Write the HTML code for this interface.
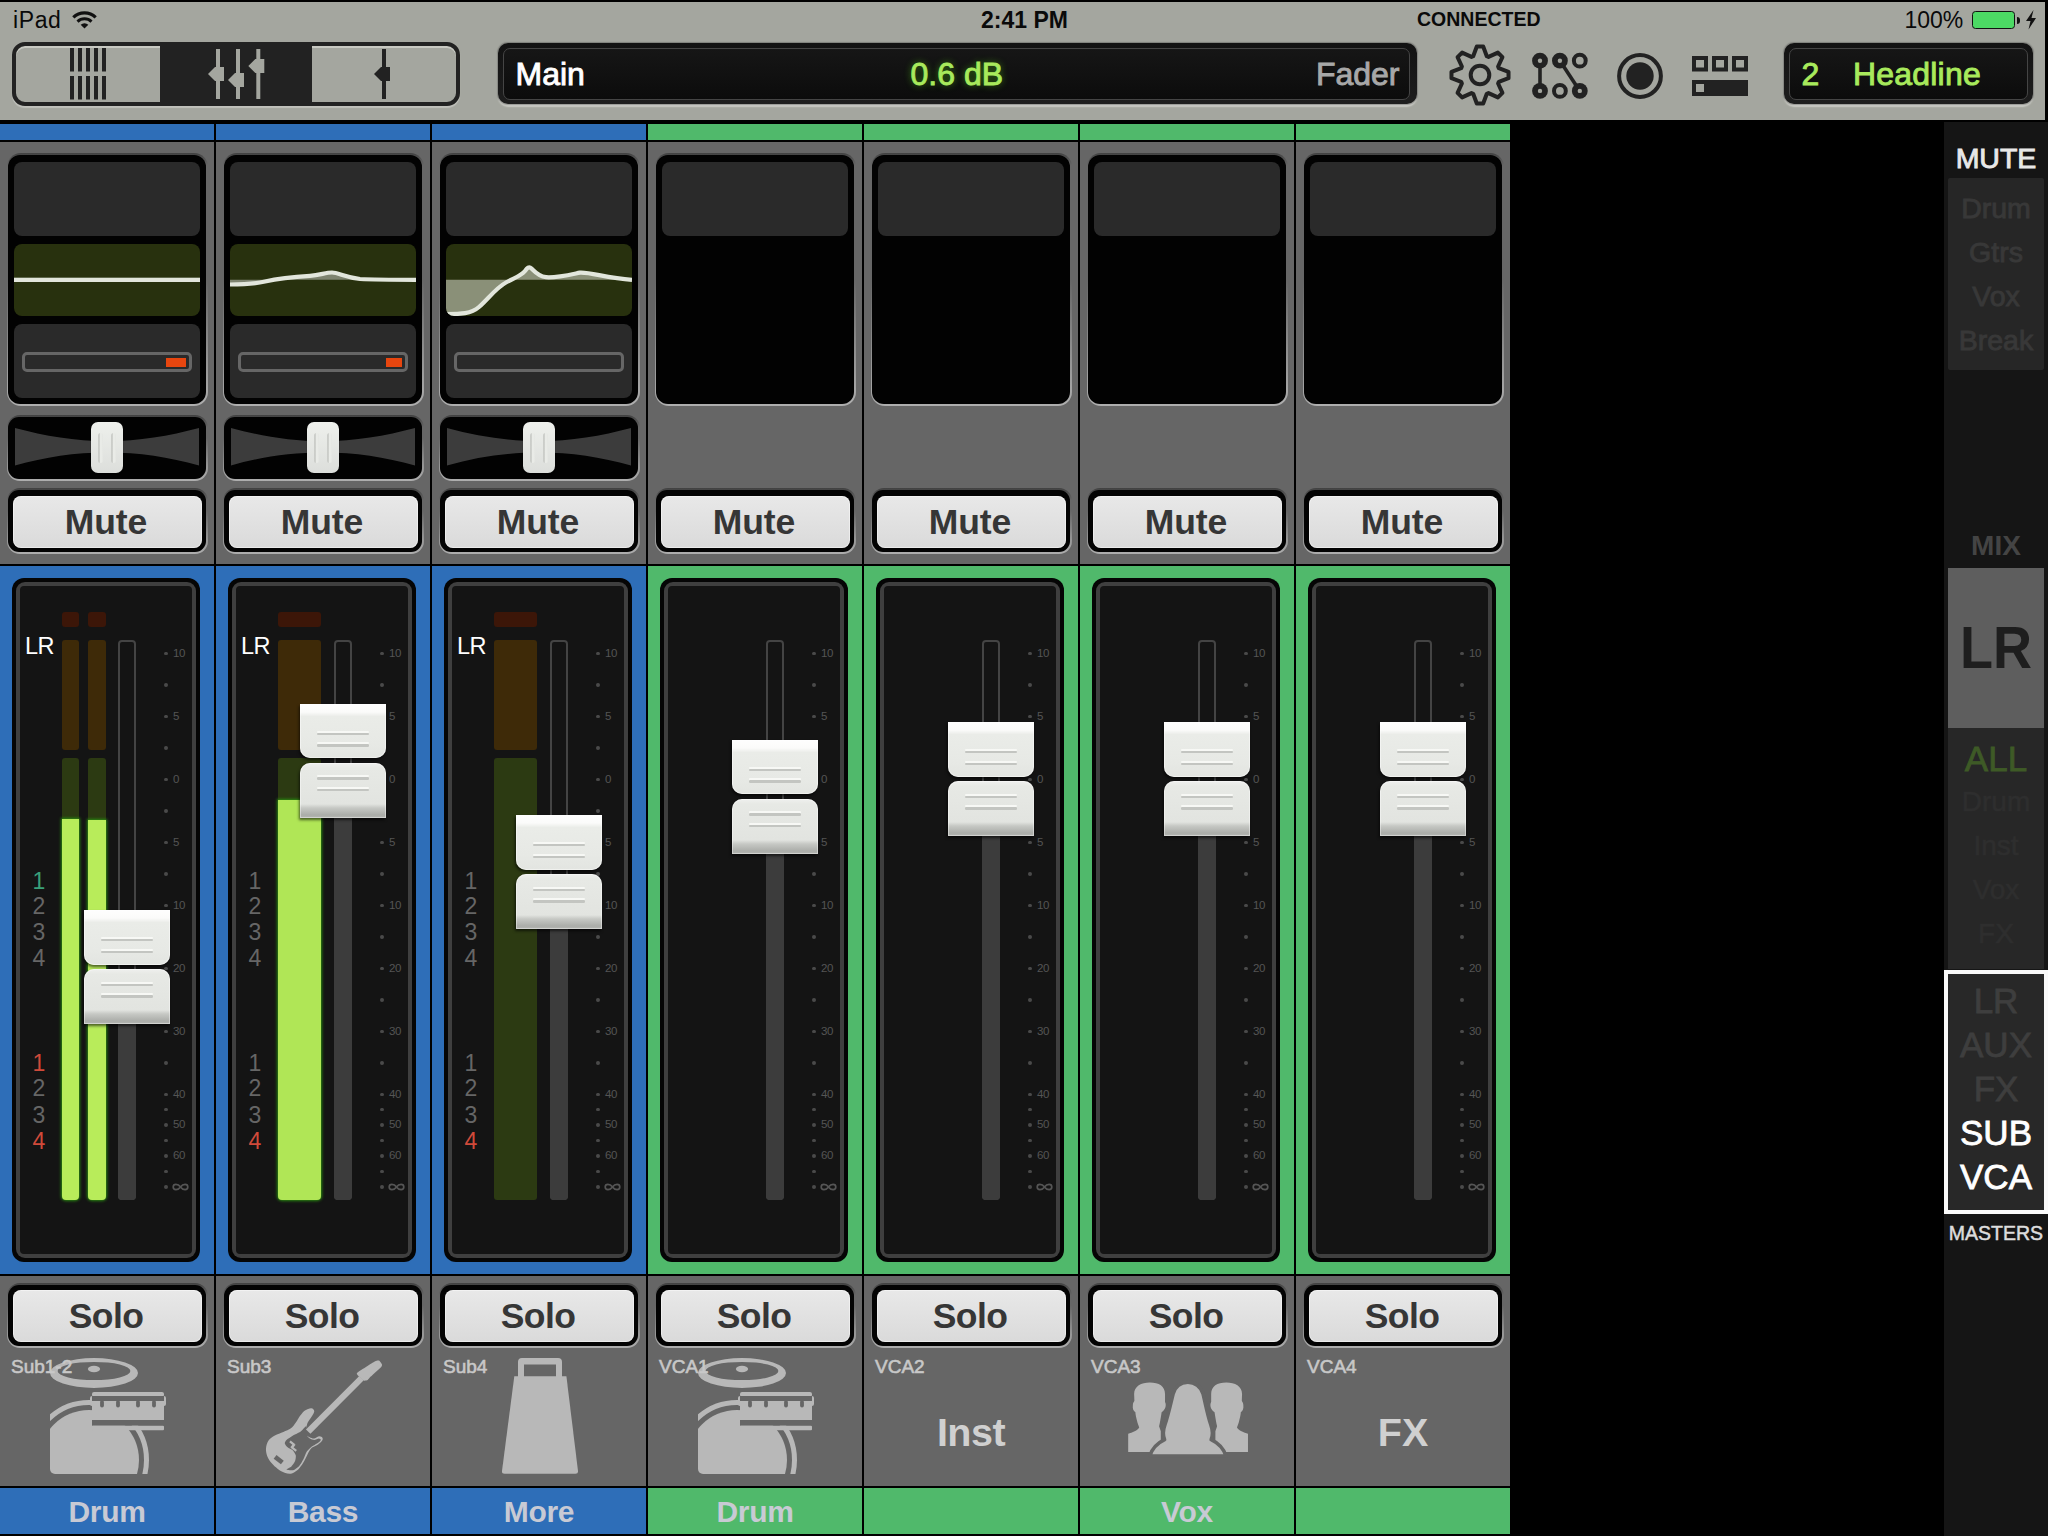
<!DOCTYPE html>
<html><head><meta charset="utf-8"><style>
html,body{margin:0;padding:0;}
body{width:2048px;height:1536px;background:#000;position:relative;overflow:hidden;font-family:"Liberation Sans", sans-serif;}
body>div{position:absolute;}
.t{position:absolute;line-height:1;white-space:nowrap;}
</style></head><body>
<div style="left:0px;top:2px;width:2045px;height:118px;background:#a4a69f;"></div>
<div class="t" style="left:13px;top:9.33px;font-size:23px;color:#0a0a0a;font-weight:normal;letter-spacing:0.6px;">iPad</div>
<svg style="position:absolute;left:72px;top:10px;" width="26" height="20" viewBox="0 0 26 20"><path d="M12.5 18.6 L8.68 14.78 A5.4 5.4 0 0 1 16.32 14.78 Z" fill="#111"/><path d="M5.50 11.60 A9.9 9.9 0 0 1 19.50 11.60" stroke="#111" stroke-width="2.9" fill="none"/><path d="M1.33 7.43 A15.8 15.8 0 0 1 23.67 7.43" stroke="#111" stroke-width="3.2" fill="none"/></svg>
<div class="t" style="left:981px;top:9.33px;font-size:23px;color:#0a0a0a;font-weight:bold;">2:41 PM</div>
<div class="t" style="left:1417px;top:10.49px;font-size:19.5px;color:#0a0a0a;font-weight:bold;">CONNECTED</div>
<div class="t" style="left:1904.5px;top:9.23px;font-size:23px;color:#0a0a0a;font-weight:normal;">100%</div>
<div style="left:1972px;top:11px;width:41px;height:15.5px;border:1.5px solid #111;border-radius:3.5px;background:#4cd964;"></div>
<div style="left:2016.5px;top:17px;width:3px;height:6.5px;background:#111;border-radius:0 3px 3px 0;"></div>
<svg style="position:absolute;left:2025px;top:10px;" width="12" height="20" viewBox="0 0 12 20"><path d="M8.5 0 L1 11 L5.5 11 L3.5 19.5 L11 8 L6.5 8 Z" fill="#111"/></svg>
<div style="left:12px;top:42px;width:440px;height:56px;border:4px solid #222;border-radius:13px;background:#a4a69f;overflow:hidden;box-shadow:inset 0 2px 0 rgba(215,216,210,0.7), 0 1.5px 1px rgba(220,220,215,0.5);"><div style="position:absolute;left:144px;top:0;width:152px;height:56px;background:#222;"></div></div>
<svg style="position:absolute;left:70px;top:48px;" width="36" height="52" viewBox="0 0 36 52"><rect x="0" y="0" width="4" height="23.5" fill="#222"/><rect x="0" y="28" width="4" height="23.5" fill="#222"/><rect x="8" y="0" width="4" height="23.5" fill="#222"/><rect x="8" y="28" width="4" height="23.5" fill="#222"/><rect x="16" y="0" width="4" height="23.5" fill="#222"/><rect x="16" y="28" width="4" height="23.5" fill="#222"/><rect x="24" y="0" width="4" height="23.5" fill="#222"/><rect x="24" y="28" width="4" height="23.5" fill="#222"/><rect x="32" y="0" width="4" height="23.5" fill="#222"/><rect x="32" y="28" width="4" height="23.5" fill="#222"/></svg>
<svg style="position:absolute;left:200px;top:48px;" width="70" height="52" viewBox="0 0 70 52"><rect x="16" y="1" width="4" height="50" fill="#a4a69f"/><path d="M24 19 L15 19 L8 26 L15 33 L24 33 Z" fill="#a4a69f"/><rect x="36" y="1" width="4" height="50" fill="#a4a69f"/><path d="M44 25 L35 25 L28 32 L35 39 L44 39 Z" fill="#a4a69f"/><rect x="56.3" y="1" width="4" height="50" fill="#a4a69f"/><path d="M64.3 11 L55.3 11 L48.3 18 L55.3 25 L64.3 25 Z" fill="#a4a69f"/></svg>
<svg style="position:absolute;left:364px;top:48px;" width="40" height="52" viewBox="0 0 40 52"><rect x="18" y="1" width="4" height="50" fill="#222"/><path d="M26 19 L17 19 L10 26 L17 33 L26 33 Z" fill="#222"/></svg>
<div style="left:498px;top:43px;width:919px;height:61px;border-radius:10px;background:linear-gradient(#121212,#1e1e1e);box-shadow:0 0 1px 1px rgba(60,60,60,0.35), 0 2.5px 1.5px rgba(235,235,230,0.55);"></div>
<div style="left:503px;top:47.5px;width:907px;height:52px;border-radius:7px;background:linear-gradient(#161616,#0c0c0c);border:1.5px solid #454545;box-sizing:border-box;"></div>
<div class="t" style="left:515.5px;top:58.11px;font-size:32px;color:#ffffff;font-weight:normal;-webkit-text-stroke:0.9px #ffffff;">Main</div>
<div class="t" style="left:910.5px;top:58.11px;font-size:32px;color:#a8ea5c;font-weight:normal;-webkit-text-stroke:0.9px #a8ea5c;text-shadow:0 0 7px rgba(70,160,20,0.9);">0.6 dB</div>
<div class="t" style="left:1199.5px;top:58.11px;width:200px;text-align:right;font-size:32px;color:#a8a8a8;font-weight:normal;-webkit-text-stroke:0.9px #a8a8a8;">Fader</div>
<svg style="position:absolute;left:1440px;top:35px;" width="80" height="80" viewBox="0 0 80 80"><path d="M33.20 21.19 L36.80 11.48 L43.20 11.48 L46.80 21.19 L48.49 21.89 L57.90 17.57 L62.43 22.10 L58.11 31.51 L58.81 33.20 L68.52 36.80 L68.52 43.20 L58.81 46.80 L58.11 48.49 L62.43 57.90 L57.90 62.43 L48.49 58.11 L46.80 58.81 L43.20 68.52 L36.80 68.52 L33.20 58.81 L31.51 58.11 L22.10 62.43 L17.57 57.90 L21.89 48.49 L21.19 46.80 L11.48 43.20 L11.48 36.80 L21.19 33.20 L21.89 31.51 L17.57 22.10 L22.10 17.57 L31.51 21.89 Z" fill="none" stroke="#222" stroke-width="4" stroke-linejoin="round"/><circle cx="40" cy="40" r="9.3" fill="none" stroke="#222" stroke-width="4"/></svg>
<svg style="position:absolute;left:1500px;top:30px;" width="100" height="80" viewBox="0 0 100 80"><line x1="40" y1="30.7" x2="40" y2="60.9" stroke="#222" stroke-width="3.6"/><line x1="59.9" y1="30.7" x2="79.8" y2="60.9" stroke="#222" stroke-width="3.6"/><circle cx="40" cy="30.7" r="7.9" fill="#222"/><circle cx="40" cy="30.7" r="2.2" fill="#a4a69f"/><circle cx="59.9" cy="30.7" r="7.9" fill="#222"/><circle cx="59.9" cy="30.7" r="2.2" fill="#a4a69f"/><circle cx="79.8" cy="30.7" r="5.9" fill="none" stroke="#222" stroke-width="4"/><circle cx="40" cy="60.9" r="7.9" fill="#222"/><circle cx="40" cy="60.9" r="2.2" fill="#a4a69f"/><circle cx="59.9" cy="60.9" r="5.9" fill="none" stroke="#222" stroke-width="4"/><circle cx="79.8" cy="60.9" r="7.9" fill="#222"/><circle cx="79.8" cy="60.9" r="2.2" fill="#a4a69f"/></svg>
<svg style="position:absolute;left:1610px;top:46px;" width="60" height="60" viewBox="0 0 60 60"><circle cx="30" cy="30" r="20.9" fill="none" stroke="#222" stroke-width="4"/><circle cx="30" cy="30" r="13.7" fill="#222"/></svg>
<svg style="position:absolute;left:1690px;top:50px;" width="60" height="50" viewBox="0 0 60 50"><rect x="4" y="8" width="12" height="11.5" fill="none" stroke="#222" stroke-width="4"/><rect x="24" y="8" width="12" height="11.5" fill="none" stroke="#222" stroke-width="4"/><rect x="44" y="8" width="12" height="11.5" fill="none" stroke="#222" stroke-width="4"/><rect x="2" y="30" width="56" height="16" fill="#222"/><rect x="6" y="34" width="8" height="8" fill="#a4a69f"/></svg>
<div style="left:1784px;top:43px;width:249px;height:61px;border-radius:10px;background:linear-gradient(#121212,#1e1e1e);box-shadow:0 0 1px 1px rgba(60,60,60,0.35), 0 2.5px 1.5px rgba(235,235,230,0.55);"></div>
<div style="left:1789px;top:47.5px;width:239px;height:52px;border-radius:7px;background:linear-gradient(#161616,#0c0c0c);border:1.5px solid #454545;box-sizing:border-box;"></div>
<div class="t" style="left:1801.5px;top:57.91px;font-size:32px;color:#a8ea5c;font-weight:normal;-webkit-text-stroke:0.9px #a8ea5c;">2</div>
<div class="t" style="left:1853px;top:57.91px;font-size:32px;color:#a8ea5c;font-weight:normal;letter-spacing:0.2px;-webkit-text-stroke:0.9px #a8ea5c;">Headline</div>
<div style="left:0px;top:124px;width:214px;height:16px;background:#2e6eb8;"></div>
<div style="left:0px;top:142px;width:214px;height:422px;background:#666666;"></div>
<div style="left:6.5px;top:152.5px;width:201px;height:253.5px;border-radius:14px;background:linear-gradient(rgba(40,40,40,0.6) 0px, rgba(90,90,90,0) 12px, rgba(170,170,170,0) 50%, rgba(178,178,178,0.95) 100%);"></div>
<div style="left:8px;top:155px;width:198px;height:249px;border-radius:12px;background:#020202;"></div>
<div style="left:14px;top:161.5px;width:186px;height:74px;background:#2a2a2a;border-radius:8px;"></div>
<div style="left:14px;top:244px;width:186px;height:72px;border-radius:8px;background:#28310e;overflow:hidden;"><svg style="position:absolute;left:0;top:0" width="186" height="72" viewBox="0 0 186 72"><rect x="0" y="33.699999999999996" width="186" height="4.3" fill="#e2e6dc"/></svg></div>
<div style="left:14px;top:324px;width:186px;height:74px;background:#2a2a2a;border-radius:8px;"></div>
<div style="left:22px;top:351.5px;width:170px;height:20.5px;border:3px solid #666;border-radius:5px;background:#2a2a2a;box-sizing:border-box;"></div>
<div style="left:165.5px;top:357.5px;width:20.5px;height:9.2px;background:#e8460f;"></div>
<div style="left:6.5px;top:414.5px;width:201px;height:66.5px;border-radius:13px;background:linear-gradient(rgba(40,40,40,0.6) 0px, rgba(90,90,90,0) 12px, rgba(170,170,170,0) 35%, rgba(178,178,178,0.95) 100%);"></div>
<div style="left:8px;top:417px;width:198px;height:62px;border-radius:11px;background:#020202;"></div>
<svg style="position:absolute;left:15px;top:428px;" width="184" height="38" viewBox="0 0 184 38"><path d="M0 0 C 30 8 60 13 92 13.5 C 124 13 154 8 184 0 L184 37.5 C 154 29 124 24.5 92 24.5 C 60 24.5 30 29 0 37.5 Z" fill="#3c3c3c"/></svg>
<div style="left:91px;top:422px;width:32px;height:51px;border-radius:7px;background:linear-gradient(#eef0ec,#dcdedb);box-shadow:0 1px 1px rgba(0,0,0,0.5);"></div>
<div style="left:98.3px;top:433px;width:5px;height:30px;background:linear-gradient(to right,#c9cbc7 0,#cfd1cd 1.6px,#eceeea 2.6px,#e4e6e2 5px);border-radius:2.5px;"></div>
<div style="left:110.5px;top:433px;width:5px;height:30px;background:linear-gradient(to right,#c9cbc7 0,#cfd1cd 1.6px,#eceeea 2.6px,#e4e6e2 5px);border-radius:2.5px;"></div>
<div style="left:6.5px;top:487.5px;width:201px;height:66.5px;border-radius:13px;background:linear-gradient(rgba(40,40,40,0.6) 0px, rgba(90,90,90,0) 12px, rgba(170,170,170,0) 35%, rgba(178,178,178,0.95) 100%);"></div>
<div style="left:8px;top:490px;width:198px;height:62px;border-radius:11px;background:#030303;"></div>
<div style="left:12.5px;top:496px;width:189.5px;height:51.5px;border-radius:8px;background:linear-gradient(#e8e8e8,#dadada);box-shadow:inset 0 0 0 1px rgba(255,255,255,0.45);"></div>
<div class="t" style="left:-1px;top:504.75px;width:214px;text-align:center;font-size:35.5px;color:#363636;font-weight:bold;letter-spacing:-0.1px;">Mute</div>
<div style="left:0px;top:566px;width:214px;height:708px;background:#2e6eb8;"></div>
<div style="left:12px;top:578px;width:188px;height:684px;border-radius:12px;background:#050505;"></div>
<div style="left:16px;top:582px;width:180px;height:676px;border-radius:9px;background:#3f3f3f;"></div>
<div style="left:20px;top:586px;width:172px;height:668px;border-radius:4px;background:#141414;"></div>
<div style="left:163.8px;top:651.6px;width:3.8px;height:3.8px;background:#4a4a4a;border-radius:50%;"></div>
<div class="t" style="left:173px;top:647.87px;font-size:11.5px;color:#555;font-weight:normal;letter-spacing:-0.3px;">10</div>
<div style="left:163.8px;top:683.1px;width:3.8px;height:3.8px;background:#4a4a4a;border-radius:50%;"></div>
<div style="left:163.8px;top:714.6px;width:3.8px;height:3.8px;background:#4a4a4a;border-radius:50%;"></div>
<div class="t" style="left:173px;top:710.87px;font-size:11.5px;color:#555;font-weight:normal;letter-spacing:-0.3px;">5</div>
<div style="left:163.8px;top:746.1px;width:3.8px;height:3.8px;background:#4a4a4a;border-radius:50%;"></div>
<div style="left:163.8px;top:777.6px;width:3.8px;height:3.8px;background:#4a4a4a;border-radius:50%;"></div>
<div class="t" style="left:173px;top:773.87px;font-size:11.5px;color:#555;font-weight:normal;letter-spacing:-0.3px;">0</div>
<div style="left:163.8px;top:809.1px;width:3.8px;height:3.8px;background:#4a4a4a;border-radius:50%;"></div>
<div style="left:163.8px;top:840.6px;width:3.8px;height:3.8px;background:#4a4a4a;border-radius:50%;"></div>
<div class="t" style="left:173px;top:836.87px;font-size:11.5px;color:#555;font-weight:normal;letter-spacing:-0.3px;">5</div>
<div style="left:163.8px;top:872.1px;width:3.8px;height:3.8px;background:#4a4a4a;border-radius:50%;"></div>
<div style="left:163.8px;top:903.6px;width:3.8px;height:3.8px;background:#4a4a4a;border-radius:50%;"></div>
<div class="t" style="left:173px;top:899.87px;font-size:11.5px;color:#555;font-weight:normal;letter-spacing:-0.3px;">10</div>
<div style="left:163.8px;top:935.1px;width:3.8px;height:3.8px;background:#4a4a4a;border-radius:50%;"></div>
<div style="left:163.8px;top:966.6px;width:3.8px;height:3.8px;background:#4a4a4a;border-radius:50%;"></div>
<div class="t" style="left:173px;top:962.87px;font-size:11.5px;color:#555;font-weight:normal;letter-spacing:-0.3px;">20</div>
<div style="left:163.8px;top:998.1px;width:3.8px;height:3.8px;background:#4a4a4a;border-radius:50%;"></div>
<div style="left:163.8px;top:1029.6px;width:3.8px;height:3.8px;background:#4a4a4a;border-radius:50%;"></div>
<div class="t" style="left:173px;top:1025.87px;font-size:11.5px;color:#555;font-weight:normal;letter-spacing:-0.3px;">30</div>
<div style="left:163.8px;top:1061.1px;width:3.8px;height:3.8px;background:#4a4a4a;border-radius:50%;"></div>
<div style="left:163.8px;top:1092.6px;width:3.8px;height:3.8px;background:#4a4a4a;border-radius:50%;"></div>
<div class="t" style="left:173px;top:1088.87px;font-size:11.5px;color:#555;font-weight:normal;letter-spacing:-0.3px;">40</div>
<div style="left:163.8px;top:1107.6px;width:3.8px;height:3.8px;background:#4a4a4a;border-radius:50%;"></div>
<div style="left:163.8px;top:1123.1px;width:3.8px;height:3.8px;background:#4a4a4a;border-radius:50%;"></div>
<div class="t" style="left:173px;top:1119.37px;font-size:11.5px;color:#555;font-weight:normal;letter-spacing:-0.3px;">50</div>
<div style="left:163.8px;top:1138.6px;width:3.8px;height:3.8px;background:#4a4a4a;border-radius:50%;"></div>
<div style="left:163.8px;top:1154.1px;width:3.8px;height:3.8px;background:#4a4a4a;border-radius:50%;"></div>
<div class="t" style="left:173px;top:1150.37px;font-size:11.5px;color:#555;font-weight:normal;letter-spacing:-0.3px;">60</div>
<div style="left:163.8px;top:1169.6px;width:3.8px;height:3.8px;background:#4a4a4a;border-radius:50%;"></div>
<div style="left:163.8px;top:1185.1px;width:3.8px;height:3.8px;background:#4a4a4a;border-radius:50%;"></div>
<svg style="position:absolute;left:172px;top:1182.0px;" width="18" height="10" viewBox="0 0 18 10"><path d="M8.5 5 C 6 1.5, 1.2 1.5, 1.2 5 C 1.2 8.5, 6 8.5, 8.5 5 C 11 1.5, 15.8 1.5, 15.8 5 C 15.8 8.5, 11 8.5, 8.5 5 Z" fill="none" stroke="#555" stroke-width="1.7"/></svg>
<div class="t" style="left:25px;top:634.61px;font-size:23.5px;color:#ffffff;font-weight:normal;letter-spacing:-0.5px;">LR</div>
<div style="left:62.3px;top:612.3px;width:17.2px;height:15px;background:#3c1608;border-radius:3px;"></div>
<div style="left:62.3px;top:640px;width:17.2px;height:110px;background:#3e2a08;border-radius:3px;"></div>
<div style="left:62.3px;top:758px;width:17.2px;height:442px;background:#2c3a12;border-radius:3px;"></div>
<div style="left:88px;top:612.3px;width:18px;height:15px;background:#3c1608;border-radius:3px;"></div>
<div style="left:88px;top:640px;width:18px;height:110px;background:#3e2a08;border-radius:3px;"></div>
<div style="left:88px;top:758px;width:18px;height:442px;background:#2c3a12;border-radius:3px;"></div>
<div style="left:62.3px;top:818.7px;width:17.2px;height:381.3px;background:#b8ec5a;border-radius:0 0 4px 4px;box-shadow:0 0 3px 1px #2a8a10;"></div>
<div style="left:88px;top:819.5px;width:18px;height:380.5px;background:#b8ec5a;border-radius:0 0 4px 4px;box-shadow:0 0 3px 1px #2a8a10;"></div>
<div class="t" style="left:28px;top:869.53px;width:22px;text-align:center;font-size:23px;color:#3aa07a;font-weight:normal;">1</div>
<div class="t" style="left:28px;top:895.23px;width:22px;text-align:center;font-size:23px;color:#666;font-weight:normal;">2</div>
<div class="t" style="left:28px;top:921.03px;width:22px;text-align:center;font-size:23px;color:#666;font-weight:normal;">3</div>
<div class="t" style="left:28px;top:946.83px;width:22px;text-align:center;font-size:23px;color:#666;font-weight:normal;">4</div>
<div class="t" style="left:28px;top:1051.53px;width:22px;text-align:center;font-size:23px;color:#d04a3a;font-weight:normal;">1</div>
<div class="t" style="left:28px;top:1077.33px;width:22px;text-align:center;font-size:23px;color:#666;font-weight:normal;">2</div>
<div class="t" style="left:28px;top:1103.53px;width:22px;text-align:center;font-size:23px;color:#666;font-weight:normal;">3</div>
<div class="t" style="left:28px;top:1129.53px;width:22px;text-align:center;font-size:23px;color:#d04a3a;font-weight:normal;">4</div>
<div style="left:118px;top:640px;width:18px;height:560px;border-radius:4px;border:2px solid #444;box-sizing:border-box;background:#141414;"></div>
<div style="left:118px;top:970px;width:18px;height:230px;background:#3c3c3c;border-radius:0 0 4px 4px;"></div>
<div style="left:84px;top:910px;width:86px;height:54.5px;border-radius:0 0 10px 10px;background:linear-gradient(#fefefe 0px,#fbfbfa 8px,#eaece8 12.5px,#e7e9e5 40px,#e3e5e1 54px);box-shadow:inset 0 0 0 1px rgba(255,255,255,0.45), -1px 2px 3px rgba(0,0,0,0.6);"></div>
<div style="left:84px;top:969px;width:86px;height:55px;border-radius:10px 10px 0 0;background:linear-gradient(#eff0ee 0px,#e7e9e5 5px,#e2e4e0 41px,#c6c8c4 45px,#abada9 52px,#b4b6b2 55px);box-shadow:inset 0 0 0 1px rgba(255,255,255,0.4), -1px 2px 3px rgba(0,0,0,0.6);"></div>
<div style="left:101px;top:937.0px;width:52px;height:2.2px;background:#f7f8f5;border-radius:1px;"></div>
<div style="left:101px;top:939.0px;width:52px;height:2.4px;background:#c3c5c1;border-radius:1.2px;"></div>
<div style="left:101px;top:948.8px;width:52px;height:2.2px;background:#f7f8f5;border-radius:1px;"></div>
<div style="left:101px;top:950.8px;width:52px;height:2.4px;background:#c3c5c1;border-radius:1.2px;"></div>
<div style="left:101px;top:981.8px;width:52px;height:2.2px;background:#f7f8f5;border-radius:1px;"></div>
<div style="left:101px;top:983.8px;width:52px;height:2.4px;background:#c3c5c1;border-radius:1.2px;"></div>
<div style="left:101px;top:993.1999999999999px;width:52px;height:2.2px;background:#f7f8f5;border-radius:1px;"></div>
<div style="left:101px;top:995.1999999999999px;width:52px;height:2.4px;background:#c3c5c1;border-radius:1.2px;"></div>
<div style="left:0px;top:1276px;width:214px;height:210px;background:#666666;"></div>
<div style="left:6.5px;top:1282.5px;width:201px;height:65.5px;border-radius:13px;background:linear-gradient(rgba(40,40,40,0.6) 0px, rgba(90,90,90,0) 12px, rgba(170,170,170,0) 35%, rgba(178,178,178,0.95) 100%);"></div>
<div style="left:8px;top:1285px;width:198px;height:61px;border-radius:11px;background:#030303;"></div>
<div style="left:12.5px;top:1289.5px;width:189.5px;height:52.5px;border-radius:8px;background:linear-gradient(#e8e8e8,#dadada);box-shadow:inset 0 0 0 1px rgba(255,255,255,0.45);"></div>
<div class="t" style="left:-1px;top:1298.95px;width:214px;text-align:center;font-size:35.5px;color:#363636;font-weight:bold;letter-spacing:-0.6px;">Solo</div>
<svg style="position:absolute;left:0px;top:1350px;" width="214" height="130" viewBox="0 0 214 130"><defs><clipPath id="dc0"><rect x="50" y="-20" width="200" height="144" rx="5"/></clipPath></defs><g clip-path="url(#dc0)"><circle cx="89" cy="110" r="57.5" fill="none" stroke="#b8b8b8" stroke-width="5"/><circle cx="89" cy="110" r="50" fill="#b8b8b8"/></g><rect x="92" y="41.9" width="72" height="5" rx="2" fill="#b8b8b8"/><rect x="90" y="46" width="76" height="10" rx="2" fill="#b8b8b8"/><rect x="92" y="46" width="72" height="5" fill="#666666"/><rect x="92" y="51" width="72" height="19" fill="#b8b8b8"/><rect x="100.1" y="50" width="3.8" height="7.5" rx="1.9" fill="#666666"/><rect x="116.1" y="50" width="3.8" height="7.5" rx="1.9" fill="#666666"/><rect x="136.1" y="50" width="3.8" height="7.5" rx="1.9" fill="#666666"/><rect x="152.1" y="50" width="3.8" height="7.5" rx="1.9" fill="#666666"/><rect x="92" y="70" width="72" height="5.7" fill="#666666"/><rect x="92" y="75.7" width="72" height="4.5" rx="1" fill="#b8b8b8"/><path fill-rule="evenodd" d="M50 23 A44 15 0 1 0 138 23 A44 15 0 1 0 50 23 Z M57.6 21 A36.4 9.1 0 1 0 130.4 21 A36.4 9.1 0 1 0 57.6 21 Z" fill="#b8b8b8"/><ellipse cx="94" cy="19" rx="6.1" ry="3.2" fill="#b8b8b8"/></svg>
<div class="t" style="left:11px;top:1356.72px;font-size:19px;color:#c8c8c8;font-weight:normal;-webkit-text-stroke:0.6px #c8c8c8;">Sub1-2</div>
<div style="left:0px;top:1488px;width:214px;height:46px;background:#2e6eb8;"></div>
<div class="t" style="left:0px;top:1497.20px;width:214px;text-align:center;font-size:30px;color:#c8cad4;font-weight:bold;letter-spacing:-0.3px;">Drum</div>
<div style="left:216px;top:124px;width:214px;height:16px;background:#2e6eb8;"></div>
<div style="left:216px;top:142px;width:214px;height:422px;background:#666666;"></div>
<div style="left:222.5px;top:152.5px;width:201px;height:253.5px;border-radius:14px;background:linear-gradient(rgba(40,40,40,0.6) 0px, rgba(90,90,90,0) 12px, rgba(170,170,170,0) 50%, rgba(178,178,178,0.95) 100%);"></div>
<div style="left:224px;top:155px;width:198px;height:249px;border-radius:12px;background:#020202;"></div>
<div style="left:230px;top:161.5px;width:186px;height:74px;background:#2a2a2a;border-radius:8px;"></div>
<div style="left:230px;top:244px;width:186px;height:72px;border-radius:8px;background:#28310e;overflow:hidden;"><svg style="position:absolute;left:0;top:0" width="186" height="72" viewBox="0 0 186 72"><path d="M0 40.5 C 15 40.5, 25 40, 35 37.5 C 48 34.5, 60 33, 80 31.8 C 90 31, 96 28.5, 102 28.5 C 108 28.5, 115 33, 130 35 C 145 35.8, 170 35.8, 186 35.8 L186 35.8 L0 35.8 Z" fill="#7e8470"/><path d="M0 40.5 C 15 40.5, 25 40, 35 37.5 C 48 34.5, 60 33, 80 31.8 C 90 31, 96 28.5, 102 28.5 C 108 28.5, 115 33, 130 35 C 145 35.8, 170 35.8, 186 35.8" fill="none" stroke="#e2e6dc" stroke-width="4.2" stroke-linecap="butt"/></svg></div>
<div style="left:230px;top:324px;width:186px;height:74px;background:#2a2a2a;border-radius:8px;"></div>
<div style="left:238px;top:351.5px;width:170px;height:20.5px;border:3px solid #666;border-radius:5px;background:#2a2a2a;box-sizing:border-box;"></div>
<div style="left:386px;top:357.5px;width:16px;height:9.2px;background:#e8460f;"></div>
<div style="left:222.5px;top:414.5px;width:201px;height:66.5px;border-radius:13px;background:linear-gradient(rgba(40,40,40,0.6) 0px, rgba(90,90,90,0) 12px, rgba(170,170,170,0) 35%, rgba(178,178,178,0.95) 100%);"></div>
<div style="left:224px;top:417px;width:198px;height:62px;border-radius:11px;background:#020202;"></div>
<svg style="position:absolute;left:231px;top:428px;" width="184" height="38" viewBox="0 0 184 38"><path d="M0 0 C 30 8 60 13 92 13.5 C 124 13 154 8 184 0 L184 37.5 C 154 29 124 24.5 92 24.5 C 60 24.5 30 29 0 37.5 Z" fill="#3c3c3c"/></svg>
<div style="left:307px;top:422px;width:32px;height:51px;border-radius:7px;background:linear-gradient(#eef0ec,#dcdedb);box-shadow:0 1px 1px rgba(0,0,0,0.5);"></div>
<div style="left:314.3px;top:433px;width:5px;height:30px;background:linear-gradient(to right,#c9cbc7 0,#cfd1cd 1.6px,#eceeea 2.6px,#e4e6e2 5px);border-radius:2.5px;"></div>
<div style="left:326.5px;top:433px;width:5px;height:30px;background:linear-gradient(to right,#c9cbc7 0,#cfd1cd 1.6px,#eceeea 2.6px,#e4e6e2 5px);border-radius:2.5px;"></div>
<div style="left:222.5px;top:487.5px;width:201px;height:66.5px;border-radius:13px;background:linear-gradient(rgba(40,40,40,0.6) 0px, rgba(90,90,90,0) 12px, rgba(170,170,170,0) 35%, rgba(178,178,178,0.95) 100%);"></div>
<div style="left:224px;top:490px;width:198px;height:62px;border-radius:11px;background:#030303;"></div>
<div style="left:228.5px;top:496px;width:189.5px;height:51.5px;border-radius:8px;background:linear-gradient(#e8e8e8,#dadada);box-shadow:inset 0 0 0 1px rgba(255,255,255,0.45);"></div>
<div class="t" style="left:215px;top:504.75px;width:214px;text-align:center;font-size:35.5px;color:#363636;font-weight:bold;letter-spacing:-0.1px;">Mute</div>
<div style="left:216px;top:566px;width:214px;height:708px;background:#2e6eb8;"></div>
<div style="left:228px;top:578px;width:188px;height:684px;border-radius:12px;background:#050505;"></div>
<div style="left:232px;top:582px;width:180px;height:676px;border-radius:9px;background:#3f3f3f;"></div>
<div style="left:236px;top:586px;width:172px;height:668px;border-radius:4px;background:#141414;"></div>
<div style="left:379.8px;top:651.6px;width:3.8px;height:3.8px;background:#4a4a4a;border-radius:50%;"></div>
<div class="t" style="left:389px;top:647.87px;font-size:11.5px;color:#555;font-weight:normal;letter-spacing:-0.3px;">10</div>
<div style="left:379.8px;top:683.1px;width:3.8px;height:3.8px;background:#4a4a4a;border-radius:50%;"></div>
<div style="left:379.8px;top:714.6px;width:3.8px;height:3.8px;background:#4a4a4a;border-radius:50%;"></div>
<div class="t" style="left:389px;top:710.87px;font-size:11.5px;color:#555;font-weight:normal;letter-spacing:-0.3px;">5</div>
<div style="left:379.8px;top:746.1px;width:3.8px;height:3.8px;background:#4a4a4a;border-radius:50%;"></div>
<div style="left:379.8px;top:777.6px;width:3.8px;height:3.8px;background:#4a4a4a;border-radius:50%;"></div>
<div class="t" style="left:389px;top:773.87px;font-size:11.5px;color:#555;font-weight:normal;letter-spacing:-0.3px;">0</div>
<div style="left:379.8px;top:809.1px;width:3.8px;height:3.8px;background:#4a4a4a;border-radius:50%;"></div>
<div style="left:379.8px;top:840.6px;width:3.8px;height:3.8px;background:#4a4a4a;border-radius:50%;"></div>
<div class="t" style="left:389px;top:836.87px;font-size:11.5px;color:#555;font-weight:normal;letter-spacing:-0.3px;">5</div>
<div style="left:379.8px;top:872.1px;width:3.8px;height:3.8px;background:#4a4a4a;border-radius:50%;"></div>
<div style="left:379.8px;top:903.6px;width:3.8px;height:3.8px;background:#4a4a4a;border-radius:50%;"></div>
<div class="t" style="left:389px;top:899.87px;font-size:11.5px;color:#555;font-weight:normal;letter-spacing:-0.3px;">10</div>
<div style="left:379.8px;top:935.1px;width:3.8px;height:3.8px;background:#4a4a4a;border-radius:50%;"></div>
<div style="left:379.8px;top:966.6px;width:3.8px;height:3.8px;background:#4a4a4a;border-radius:50%;"></div>
<div class="t" style="left:389px;top:962.87px;font-size:11.5px;color:#555;font-weight:normal;letter-spacing:-0.3px;">20</div>
<div style="left:379.8px;top:998.1px;width:3.8px;height:3.8px;background:#4a4a4a;border-radius:50%;"></div>
<div style="left:379.8px;top:1029.6px;width:3.8px;height:3.8px;background:#4a4a4a;border-radius:50%;"></div>
<div class="t" style="left:389px;top:1025.87px;font-size:11.5px;color:#555;font-weight:normal;letter-spacing:-0.3px;">30</div>
<div style="left:379.8px;top:1061.1px;width:3.8px;height:3.8px;background:#4a4a4a;border-radius:50%;"></div>
<div style="left:379.8px;top:1092.6px;width:3.8px;height:3.8px;background:#4a4a4a;border-radius:50%;"></div>
<div class="t" style="left:389px;top:1088.87px;font-size:11.5px;color:#555;font-weight:normal;letter-spacing:-0.3px;">40</div>
<div style="left:379.8px;top:1107.6px;width:3.8px;height:3.8px;background:#4a4a4a;border-radius:50%;"></div>
<div style="left:379.8px;top:1123.1px;width:3.8px;height:3.8px;background:#4a4a4a;border-radius:50%;"></div>
<div class="t" style="left:389px;top:1119.37px;font-size:11.5px;color:#555;font-weight:normal;letter-spacing:-0.3px;">50</div>
<div style="left:379.8px;top:1138.6px;width:3.8px;height:3.8px;background:#4a4a4a;border-radius:50%;"></div>
<div style="left:379.8px;top:1154.1px;width:3.8px;height:3.8px;background:#4a4a4a;border-radius:50%;"></div>
<div class="t" style="left:389px;top:1150.37px;font-size:11.5px;color:#555;font-weight:normal;letter-spacing:-0.3px;">60</div>
<div style="left:379.8px;top:1169.6px;width:3.8px;height:3.8px;background:#4a4a4a;border-radius:50%;"></div>
<div style="left:379.8px;top:1185.1px;width:3.8px;height:3.8px;background:#4a4a4a;border-radius:50%;"></div>
<svg style="position:absolute;left:388px;top:1182.0px;" width="18" height="10" viewBox="0 0 18 10"><path d="M8.5 5 C 6 1.5, 1.2 1.5, 1.2 5 C 1.2 8.5, 6 8.5, 8.5 5 C 11 1.5, 15.8 1.5, 15.8 5 C 15.8 8.5, 11 8.5, 8.5 5 Z" fill="none" stroke="#555" stroke-width="1.7"/></svg>
<div class="t" style="left:241px;top:634.61px;font-size:23.5px;color:#ffffff;font-weight:normal;letter-spacing:-0.5px;">LR</div>
<div style="left:278.4px;top:612.3px;width:43.1px;height:15px;background:#3c1608;border-radius:3px;"></div>
<div style="left:278.4px;top:640px;width:43.1px;height:110px;background:#3e2a08;border-radius:3px;"></div>
<div style="left:278.4px;top:758px;width:43.1px;height:442px;background:#2c3a12;border-radius:3px;"></div>
<div style="left:278.4px;top:800px;width:43.1px;height:400px;background:#b0e656;border-radius:0 0 4px 4px;box-shadow:0 0 3px 1px #2a8a10;"></div>
<div class="t" style="left:244px;top:869.53px;width:22px;text-align:center;font-size:23px;color:#666;font-weight:normal;">1</div>
<div class="t" style="left:244px;top:895.23px;width:22px;text-align:center;font-size:23px;color:#666;font-weight:normal;">2</div>
<div class="t" style="left:244px;top:921.03px;width:22px;text-align:center;font-size:23px;color:#666;font-weight:normal;">3</div>
<div class="t" style="left:244px;top:946.83px;width:22px;text-align:center;font-size:23px;color:#666;font-weight:normal;">4</div>
<div class="t" style="left:244px;top:1051.53px;width:22px;text-align:center;font-size:23px;color:#666;font-weight:normal;">1</div>
<div class="t" style="left:244px;top:1077.33px;width:22px;text-align:center;font-size:23px;color:#666;font-weight:normal;">2</div>
<div class="t" style="left:244px;top:1103.53px;width:22px;text-align:center;font-size:23px;color:#666;font-weight:normal;">3</div>
<div class="t" style="left:244px;top:1129.53px;width:22px;text-align:center;font-size:23px;color:#d04a3a;font-weight:normal;">4</div>
<div style="left:334px;top:640px;width:18px;height:560px;border-radius:4px;border:2px solid #444;box-sizing:border-box;background:#141414;"></div>
<div style="left:334px;top:763.5px;width:18px;height:436.5px;background:#3c3c3c;border-radius:0 0 4px 4px;"></div>
<div style="left:300px;top:703.5px;width:86px;height:54.5px;border-radius:0 0 10px 10px;background:linear-gradient(#fefefe 0px,#fbfbfa 8px,#eaece8 12.5px,#e7e9e5 40px,#e3e5e1 54px);box-shadow:inset 0 0 0 1px rgba(255,255,255,0.45), -1px 2px 3px rgba(0,0,0,0.6);"></div>
<div style="left:300px;top:762.5px;width:86px;height:55px;border-radius:10px 10px 0 0;background:linear-gradient(#eff0ee 0px,#e7e9e5 5px,#e2e4e0 41px,#c6c8c4 45px,#abada9 52px,#b4b6b2 55px);box-shadow:inset 0 0 0 1px rgba(255,255,255,0.4), -1px 2px 3px rgba(0,0,0,0.6);"></div>
<div style="left:317px;top:730.5px;width:52px;height:2.2px;background:#f7f8f5;border-radius:1px;"></div>
<div style="left:317px;top:732.5px;width:52px;height:2.4px;background:#c3c5c1;border-radius:1.2px;"></div>
<div style="left:317px;top:742.3px;width:52px;height:2.2px;background:#f7f8f5;border-radius:1px;"></div>
<div style="left:317px;top:744.3px;width:52px;height:2.4px;background:#c3c5c1;border-radius:1.2px;"></div>
<div style="left:317px;top:775.3px;width:52px;height:2.2px;background:#f7f8f5;border-radius:1px;"></div>
<div style="left:317px;top:777.3px;width:52px;height:2.4px;background:#c3c5c1;border-radius:1.2px;"></div>
<div style="left:317px;top:786.6999999999999px;width:52px;height:2.2px;background:#f7f8f5;border-radius:1px;"></div>
<div style="left:317px;top:788.6999999999999px;width:52px;height:2.4px;background:#c3c5c1;border-radius:1.2px;"></div>
<div style="left:216px;top:1276px;width:214px;height:210px;background:#666666;"></div>
<div style="left:222.5px;top:1282.5px;width:201px;height:65.5px;border-radius:13px;background:linear-gradient(rgba(40,40,40,0.6) 0px, rgba(90,90,90,0) 12px, rgba(170,170,170,0) 35%, rgba(178,178,178,0.95) 100%);"></div>
<div style="left:224px;top:1285px;width:198px;height:61px;border-radius:11px;background:#030303;"></div>
<div style="left:228.5px;top:1289.5px;width:189.5px;height:52.5px;border-radius:8px;background:linear-gradient(#e8e8e8,#dadada);box-shadow:inset 0 0 0 1px rgba(255,255,255,0.45);"></div>
<div class="t" style="left:215px;top:1298.95px;width:214px;text-align:center;font-size:35.5px;color:#363636;font-weight:bold;letter-spacing:-0.6px;">Solo</div>
<svg style="position:absolute;left:255px;top:1350px;" width="140" height="130" viewBox="0 0 140 130"><path d="M56.29 58.24 C57.84 58.38 59.21 59.93 59.25 61.37 C59.29 62.81 57.53 65.18 56.54 66.87 C55.56 68.56 54.07 70.26 53.33 71.53 C52.58 72.79 52.48 73.01 52.06 74.49 C51.63 75.97 50.93 78.72 50.79 80.41 C50.65 82.11 50.58 83.52 51.21 84.65 C51.85 85.77 53.26 86.55 54.60 87.18 C55.94 87.82 57.63 88.60 59.25 88.45 C60.87 88.31 62.95 86.41 64.33 86.34 C65.71 86.27 67.12 87.26 67.55 88.03 C67.97 88.81 67.62 89.94 66.87 90.99 C66.12 92.05 64.61 93.32 63.06 94.38 C61.51 95.44 59.04 96.21 57.56 97.34 C56.08 98.47 55.30 99.39 54.17 101.15 C53.04 102.91 51.99 105.67 50.79 107.92 C49.59 110.18 48.46 112.58 46.98 114.69 C45.50 116.81 43.73 119.11 41.90 120.62 C40.07 122.13 38.02 123.40 35.97 123.75 C33.93 124.10 31.81 123.54 29.63 122.74 C27.44 121.93 25.04 120.55 22.85 118.93 C20.67 117.30 18.27 115.12 16.51 113.00 C14.74 110.89 13.19 108.70 12.27 106.23 C11.36 103.76 10.79 100.80 11.00 98.19 C11.22 95.58 12.06 92.69 13.54 90.57 C15.02 88.45 17.42 86.93 19.89 85.49 C22.36 84.05 25.68 83.14 28.36 81.94 C31.04 80.74 33.86 79.89 35.97 78.30 C38.09 76.70 39.50 74.49 41.05 72.37 C42.60 70.26 43.80 67.58 45.29 65.60 C46.77 63.63 48.11 61.75 49.94 60.52 C51.77 59.29 54.74 58.09 56.29 58.24 Z" fill="#b8b8b8"/><path d="M51.21 76.18 C50.47 75.71 47.29 80.32 45.71 81.43 C44.13 82.53 39.33 84.67 37.67 85.66 C36.01 86.65 32.41 88.97 31.49 89.89 C30.57 90.81 29.67 92.66 29.80 93.53 C29.92 94.40 31.67 96.55 32.59 97.34 C33.51 98.13 36.71 99.37 37.67 100.30 C38.63 101.24 40.53 104.10 40.80 105.38 C41.07 106.67 40.47 110.02 39.95 111.31 C39.44 112.59 37.39 115.43 36.40 116.39 C35.41 117.35 31.29 119.07 31.49 119.52 C31.69 119.96 36.63 120.59 38.09 120.20 C39.55 119.80 42.81 117.42 44.02 116.13 C45.22 114.85 47.51 110.89 48.42 109.19 C49.33 107.49 50.88 103.01 51.80 101.57 C52.72 100.14 55.01 97.93 56.29 96.92 C57.57 95.91 61.69 93.76 62.81 92.94 C63.92 92.12 65.73 90.42 65.85 89.89 C65.98 89.37 64.68 88.45 63.91 88.45 C63.14 88.45 60.31 89.89 59.25 89.89 C58.20 89.89 55.69 88.97 54.85 88.45 C54.01 87.94 52.48 86.92 52.06 85.49 C51.63 84.06 51.95 76.65 51.21 76.18 Z" fill="#666666"/><g transform="translate(36.99 92.94) rotate(38)"><rect x="-2.6" y="-1.1" width="5.2" height="2.2" fill="#b8b8b8"/></g><g transform="translate(39.19 99.20) rotate(38)"><rect x="-2.6" y="-1.1" width="5.2" height="2.2" fill="#b8b8b8"/></g><g transform="translate(37.92 96.07) rotate(38)"><rect x="-1.3" y="-2.6" width="2.6" height="5.2" fill="#b8b8b8"/></g><g transform="translate(23.70 109.70) rotate(38)"><rect x="-4.6" y="-2.3" width="9.2" height="4.6" fill="#666666"/></g><path d="M104.28 26.07 L108.77 30.30 L55.44 83.63 L50.96 79.40 Z" fill="#b8b8b8"/><path d="M102.00 23.02 C103.16 21.65 117.94 12.46 119.77 11.43 C121.61 10.39 123.41 10.33 124.01 10.58 C124.60 10.83 126.81 13.83 126.97 14.39 C127.13 14.95 127.00 16.22 125.95 17.35 C124.91 18.48 115.55 26.87 114.44 27.93 C113.33 28.99 113.02 29.82 112.58 30.05 C112.14 30.27 109.76 30.82 109.19 30.64 C108.63 30.47 106.41 28.57 105.81 27.93 C105.21 27.30 100.83 24.40 102.00 23.02 Z" fill="#b8b8b8"/></svg>
<div class="t" style="left:227px;top:1356.72px;font-size:19px;color:#c8c8c8;font-weight:normal;-webkit-text-stroke:0.6px #c8c8c8;">Sub3</div>
<div style="left:216px;top:1488px;width:214px;height:46px;background:#2e6eb8;"></div>
<div class="t" style="left:216px;top:1497.20px;width:214px;text-align:center;font-size:30px;color:#c8cad4;font-weight:bold;letter-spacing:-0.3px;">Bass</div>
<div style="left:432px;top:124px;width:214px;height:16px;background:#2e6eb8;"></div>
<div style="left:432px;top:142px;width:214px;height:422px;background:#666666;"></div>
<div style="left:438.5px;top:152.5px;width:201px;height:253.5px;border-radius:14px;background:linear-gradient(rgba(40,40,40,0.6) 0px, rgba(90,90,90,0) 12px, rgba(170,170,170,0) 50%, rgba(178,178,178,0.95) 100%);"></div>
<div style="left:440px;top:155px;width:198px;height:249px;border-radius:12px;background:#020202;"></div>
<div style="left:446px;top:161.5px;width:186px;height:74px;background:#2a2a2a;border-radius:8px;"></div>
<div style="left:446px;top:244px;width:186px;height:72px;border-radius:8px;background:#28310e;overflow:hidden;"><svg style="position:absolute;left:0;top:0" width="186" height="72" viewBox="0 0 186 72"><path d="M0 70 C 15 70, 25 70, 33 63 C 42 55, 50 44, 60 38.5 C 68 34, 75 32, 79 27 C 81 24, 83 22, 85.5 24.5 C 89 28, 93 32.5, 100 33.2 C 110 34, 118 32, 134 28.6 C 145 28, 160 34, 186 35.8 L186 35.8 L0 35.8 Z" fill="#8a9078" fill-rule="nonzero"/><path d="M0 70 C 15 70, 25 70, 33 63 C 42 55, 50 44, 60 38.5 C 68 34, 75 32, 79 27 C 81 24, 83 22, 85.5 24.5 C 89 28, 93 32.5, 100 33.2 C 110 34, 118 32, 134 28.6 C 145 28, 160 34, 186 35.8" fill="none" stroke="#e2e6dc" stroke-width="4.2"/></svg></div>
<div style="left:446px;top:324px;width:186px;height:74px;background:#2a2a2a;border-radius:8px;"></div>
<div style="left:454px;top:351.5px;width:170px;height:20.5px;border:3px solid #666;border-radius:5px;background:#2a2a2a;box-sizing:border-box;"></div>
<div style="left:438.5px;top:414.5px;width:201px;height:66.5px;border-radius:13px;background:linear-gradient(rgba(40,40,40,0.6) 0px, rgba(90,90,90,0) 12px, rgba(170,170,170,0) 35%, rgba(178,178,178,0.95) 100%);"></div>
<div style="left:440px;top:417px;width:198px;height:62px;border-radius:11px;background:#020202;"></div>
<svg style="position:absolute;left:447px;top:428px;" width="184" height="38" viewBox="0 0 184 38"><path d="M0 0 C 30 8 60 13 92 13.5 C 124 13 154 8 184 0 L184 37.5 C 154 29 124 24.5 92 24.5 C 60 24.5 30 29 0 37.5 Z" fill="#3c3c3c"/></svg>
<div style="left:523px;top:422px;width:32px;height:51px;border-radius:7px;background:linear-gradient(#eef0ec,#dcdedb);box-shadow:0 1px 1px rgba(0,0,0,0.5);"></div>
<div style="left:530.3px;top:433px;width:5px;height:30px;background:linear-gradient(to right,#c9cbc7 0,#cfd1cd 1.6px,#eceeea 2.6px,#e4e6e2 5px);border-radius:2.5px;"></div>
<div style="left:542.5px;top:433px;width:5px;height:30px;background:linear-gradient(to right,#c9cbc7 0,#cfd1cd 1.6px,#eceeea 2.6px,#e4e6e2 5px);border-radius:2.5px;"></div>
<div style="left:438.5px;top:487.5px;width:201px;height:66.5px;border-radius:13px;background:linear-gradient(rgba(40,40,40,0.6) 0px, rgba(90,90,90,0) 12px, rgba(170,170,170,0) 35%, rgba(178,178,178,0.95) 100%);"></div>
<div style="left:440px;top:490px;width:198px;height:62px;border-radius:11px;background:#030303;"></div>
<div style="left:444.5px;top:496px;width:189.5px;height:51.5px;border-radius:8px;background:linear-gradient(#e8e8e8,#dadada);box-shadow:inset 0 0 0 1px rgba(255,255,255,0.45);"></div>
<div class="t" style="left:431px;top:504.75px;width:214px;text-align:center;font-size:35.5px;color:#363636;font-weight:bold;letter-spacing:-0.1px;">Mute</div>
<div style="left:432px;top:566px;width:214px;height:708px;background:#2e6eb8;"></div>
<div style="left:444px;top:578px;width:188px;height:684px;border-radius:12px;background:#050505;"></div>
<div style="left:448px;top:582px;width:180px;height:676px;border-radius:9px;background:#3f3f3f;"></div>
<div style="left:452px;top:586px;width:172px;height:668px;border-radius:4px;background:#141414;"></div>
<div style="left:595.8px;top:651.6px;width:3.8px;height:3.8px;background:#4a4a4a;border-radius:50%;"></div>
<div class="t" style="left:605px;top:647.87px;font-size:11.5px;color:#555;font-weight:normal;letter-spacing:-0.3px;">10</div>
<div style="left:595.8px;top:683.1px;width:3.8px;height:3.8px;background:#4a4a4a;border-radius:50%;"></div>
<div style="left:595.8px;top:714.6px;width:3.8px;height:3.8px;background:#4a4a4a;border-radius:50%;"></div>
<div class="t" style="left:605px;top:710.87px;font-size:11.5px;color:#555;font-weight:normal;letter-spacing:-0.3px;">5</div>
<div style="left:595.8px;top:746.1px;width:3.8px;height:3.8px;background:#4a4a4a;border-radius:50%;"></div>
<div style="left:595.8px;top:777.6px;width:3.8px;height:3.8px;background:#4a4a4a;border-radius:50%;"></div>
<div class="t" style="left:605px;top:773.87px;font-size:11.5px;color:#555;font-weight:normal;letter-spacing:-0.3px;">0</div>
<div style="left:595.8px;top:809.1px;width:3.8px;height:3.8px;background:#4a4a4a;border-radius:50%;"></div>
<div style="left:595.8px;top:840.6px;width:3.8px;height:3.8px;background:#4a4a4a;border-radius:50%;"></div>
<div class="t" style="left:605px;top:836.87px;font-size:11.5px;color:#555;font-weight:normal;letter-spacing:-0.3px;">5</div>
<div style="left:595.8px;top:872.1px;width:3.8px;height:3.8px;background:#4a4a4a;border-radius:50%;"></div>
<div style="left:595.8px;top:903.6px;width:3.8px;height:3.8px;background:#4a4a4a;border-radius:50%;"></div>
<div class="t" style="left:605px;top:899.87px;font-size:11.5px;color:#555;font-weight:normal;letter-spacing:-0.3px;">10</div>
<div style="left:595.8px;top:935.1px;width:3.8px;height:3.8px;background:#4a4a4a;border-radius:50%;"></div>
<div style="left:595.8px;top:966.6px;width:3.8px;height:3.8px;background:#4a4a4a;border-radius:50%;"></div>
<div class="t" style="left:605px;top:962.87px;font-size:11.5px;color:#555;font-weight:normal;letter-spacing:-0.3px;">20</div>
<div style="left:595.8px;top:998.1px;width:3.8px;height:3.8px;background:#4a4a4a;border-radius:50%;"></div>
<div style="left:595.8px;top:1029.6px;width:3.8px;height:3.8px;background:#4a4a4a;border-radius:50%;"></div>
<div class="t" style="left:605px;top:1025.87px;font-size:11.5px;color:#555;font-weight:normal;letter-spacing:-0.3px;">30</div>
<div style="left:595.8px;top:1061.1px;width:3.8px;height:3.8px;background:#4a4a4a;border-radius:50%;"></div>
<div style="left:595.8px;top:1092.6px;width:3.8px;height:3.8px;background:#4a4a4a;border-radius:50%;"></div>
<div class="t" style="left:605px;top:1088.87px;font-size:11.5px;color:#555;font-weight:normal;letter-spacing:-0.3px;">40</div>
<div style="left:595.8px;top:1107.6px;width:3.8px;height:3.8px;background:#4a4a4a;border-radius:50%;"></div>
<div style="left:595.8px;top:1123.1px;width:3.8px;height:3.8px;background:#4a4a4a;border-radius:50%;"></div>
<div class="t" style="left:605px;top:1119.37px;font-size:11.5px;color:#555;font-weight:normal;letter-spacing:-0.3px;">50</div>
<div style="left:595.8px;top:1138.6px;width:3.8px;height:3.8px;background:#4a4a4a;border-radius:50%;"></div>
<div style="left:595.8px;top:1154.1px;width:3.8px;height:3.8px;background:#4a4a4a;border-radius:50%;"></div>
<div class="t" style="left:605px;top:1150.37px;font-size:11.5px;color:#555;font-weight:normal;letter-spacing:-0.3px;">60</div>
<div style="left:595.8px;top:1169.6px;width:3.8px;height:3.8px;background:#4a4a4a;border-radius:50%;"></div>
<div style="left:595.8px;top:1185.1px;width:3.8px;height:3.8px;background:#4a4a4a;border-radius:50%;"></div>
<svg style="position:absolute;left:604px;top:1182.0px;" width="18" height="10" viewBox="0 0 18 10"><path d="M8.5 5 C 6 1.5, 1.2 1.5, 1.2 5 C 1.2 8.5, 6 8.5, 8.5 5 C 11 1.5, 15.8 1.5, 15.8 5 C 15.8 8.5, 11 8.5, 8.5 5 Z" fill="none" stroke="#555" stroke-width="1.7"/></svg>
<div class="t" style="left:457px;top:634.61px;font-size:23.5px;color:#ffffff;font-weight:normal;letter-spacing:-0.5px;">LR</div>
<div style="left:494.4px;top:612.3px;width:43.1px;height:15px;background:#3c1608;border-radius:3px;"></div>
<div style="left:494.4px;top:640px;width:43.1px;height:110px;background:#3e2a08;border-radius:3px;"></div>
<div style="left:494.4px;top:758px;width:43.1px;height:442px;background:#2c3a12;border-radius:3px;"></div>
<div class="t" style="left:460px;top:869.53px;width:22px;text-align:center;font-size:23px;color:#666;font-weight:normal;">1</div>
<div class="t" style="left:460px;top:895.23px;width:22px;text-align:center;font-size:23px;color:#666;font-weight:normal;">2</div>
<div class="t" style="left:460px;top:921.03px;width:22px;text-align:center;font-size:23px;color:#666;font-weight:normal;">3</div>
<div class="t" style="left:460px;top:946.83px;width:22px;text-align:center;font-size:23px;color:#666;font-weight:normal;">4</div>
<div class="t" style="left:460px;top:1051.53px;width:22px;text-align:center;font-size:23px;color:#666;font-weight:normal;">1</div>
<div class="t" style="left:460px;top:1077.33px;width:22px;text-align:center;font-size:23px;color:#666;font-weight:normal;">2</div>
<div class="t" style="left:460px;top:1103.53px;width:22px;text-align:center;font-size:23px;color:#666;font-weight:normal;">3</div>
<div class="t" style="left:460px;top:1129.53px;width:22px;text-align:center;font-size:23px;color:#d04a3a;font-weight:normal;">4</div>
<div style="left:550px;top:640px;width:18px;height:560px;border-radius:4px;border:2px solid #444;box-sizing:border-box;background:#141414;"></div>
<div style="left:550px;top:875px;width:18px;height:325px;background:#3c3c3c;border-radius:0 0 4px 4px;"></div>
<div style="left:516px;top:815px;width:86px;height:54.5px;border-radius:0 0 10px 10px;background:linear-gradient(#fefefe 0px,#fbfbfa 8px,#eaece8 12.5px,#e7e9e5 40px,#e3e5e1 54px);box-shadow:inset 0 0 0 1px rgba(255,255,255,0.45), -1px 2px 3px rgba(0,0,0,0.6);"></div>
<div style="left:516px;top:874px;width:86px;height:55px;border-radius:10px 10px 0 0;background:linear-gradient(#eff0ee 0px,#e7e9e5 5px,#e2e4e0 41px,#c6c8c4 45px,#abada9 52px,#b4b6b2 55px);box-shadow:inset 0 0 0 1px rgba(255,255,255,0.4), -1px 2px 3px rgba(0,0,0,0.6);"></div>
<div style="left:533px;top:842.0px;width:52px;height:2.2px;background:#f7f8f5;border-radius:1px;"></div>
<div style="left:533px;top:844.0px;width:52px;height:2.4px;background:#c3c5c1;border-radius:1.2px;"></div>
<div style="left:533px;top:853.8px;width:52px;height:2.2px;background:#f7f8f5;border-radius:1px;"></div>
<div style="left:533px;top:855.8px;width:52px;height:2.4px;background:#c3c5c1;border-radius:1.2px;"></div>
<div style="left:533px;top:886.8px;width:52px;height:2.2px;background:#f7f8f5;border-radius:1px;"></div>
<div style="left:533px;top:888.8px;width:52px;height:2.4px;background:#c3c5c1;border-radius:1.2px;"></div>
<div style="left:533px;top:898.1999999999999px;width:52px;height:2.2px;background:#f7f8f5;border-radius:1px;"></div>
<div style="left:533px;top:900.1999999999999px;width:52px;height:2.4px;background:#c3c5c1;border-radius:1.2px;"></div>
<div style="left:432px;top:1276px;width:214px;height:210px;background:#666666;"></div>
<div style="left:438.5px;top:1282.5px;width:201px;height:65.5px;border-radius:13px;background:linear-gradient(rgba(40,40,40,0.6) 0px, rgba(90,90,90,0) 12px, rgba(170,170,170,0) 35%, rgba(178,178,178,0.95) 100%);"></div>
<div style="left:440px;top:1285px;width:198px;height:61px;border-radius:11px;background:#030303;"></div>
<div style="left:444.5px;top:1289.5px;width:189.5px;height:52.5px;border-radius:8px;background:linear-gradient(#e8e8e8,#dadada);box-shadow:inset 0 0 0 1px rgba(255,255,255,0.45);"></div>
<div class="t" style="left:431px;top:1298.95px;width:214px;text-align:center;font-size:35.5px;color:#363636;font-weight:bold;letter-spacing:-0.6px;">Solo</div>
<svg style="position:absolute;left:432px;top:1350px;" width="214" height="130" viewBox="0 0 214 130"><path d="M86 27 L86 12 Q86 8 90 8 L126 8 Q130 8 130 12 L130 27 L124 27 L124 14.4 L92 14.4 L92 27 Z" fill="#b8b8b8"/><path d="M82.3 26.2 L134.4 26.2 L146 121 Q146.3 123.7 143.5 123.7 L72.6 123.7 Q69.7 123.7 70 121 Z" fill="#b8b8b8"/></svg>
<div class="t" style="left:443px;top:1356.72px;font-size:19px;color:#c8c8c8;font-weight:normal;-webkit-text-stroke:0.6px #c8c8c8;">Sub4</div>
<div style="left:432px;top:1488px;width:214px;height:46px;background:#2e6eb8;"></div>
<div class="t" style="left:432px;top:1497.20px;width:214px;text-align:center;font-size:30px;color:#c8cad4;font-weight:bold;letter-spacing:-0.3px;">More</div>
<div style="left:648px;top:124px;width:214px;height:16px;background:#50b96b;"></div>
<div style="left:648px;top:142px;width:214px;height:422px;background:#666666;"></div>
<div style="left:654.5px;top:152.5px;width:201px;height:253.5px;border-radius:14px;background:linear-gradient(rgba(40,40,40,0.6) 0px, rgba(90,90,90,0) 12px, rgba(170,170,170,0) 50%, rgba(178,178,178,0.95) 100%);"></div>
<div style="left:656px;top:155px;width:198px;height:249px;border-radius:12px;background:#020202;"></div>
<div style="left:662px;top:161.5px;width:186px;height:74px;background:#2a2a2a;border-radius:8px;"></div>
<div style="left:654.5px;top:487.5px;width:201px;height:66.5px;border-radius:13px;background:linear-gradient(rgba(40,40,40,0.6) 0px, rgba(90,90,90,0) 12px, rgba(170,170,170,0) 35%, rgba(178,178,178,0.95) 100%);"></div>
<div style="left:656px;top:490px;width:198px;height:62px;border-radius:11px;background:#030303;"></div>
<div style="left:660.5px;top:496px;width:189.5px;height:51.5px;border-radius:8px;background:linear-gradient(#e8e8e8,#dadada);box-shadow:inset 0 0 0 1px rgba(255,255,255,0.45);"></div>
<div class="t" style="left:647px;top:504.75px;width:214px;text-align:center;font-size:35.5px;color:#363636;font-weight:bold;letter-spacing:-0.1px;">Mute</div>
<div style="left:648px;top:566px;width:214px;height:708px;background:#50b96b;"></div>
<div style="left:660px;top:578px;width:188px;height:684px;border-radius:12px;background:#050505;"></div>
<div style="left:664px;top:582px;width:180px;height:676px;border-radius:9px;background:#3f3f3f;"></div>
<div style="left:668px;top:586px;width:172px;height:668px;border-radius:4px;background:#141414;"></div>
<div style="left:811.8px;top:651.6px;width:3.8px;height:3.8px;background:#4a4a4a;border-radius:50%;"></div>
<div class="t" style="left:821px;top:647.87px;font-size:11.5px;color:#555;font-weight:normal;letter-spacing:-0.3px;">10</div>
<div style="left:811.8px;top:683.1px;width:3.8px;height:3.8px;background:#4a4a4a;border-radius:50%;"></div>
<div style="left:811.8px;top:714.6px;width:3.8px;height:3.8px;background:#4a4a4a;border-radius:50%;"></div>
<div class="t" style="left:821px;top:710.87px;font-size:11.5px;color:#555;font-weight:normal;letter-spacing:-0.3px;">5</div>
<div style="left:811.8px;top:746.1px;width:3.8px;height:3.8px;background:#4a4a4a;border-radius:50%;"></div>
<div style="left:811.8px;top:777.6px;width:3.8px;height:3.8px;background:#4a4a4a;border-radius:50%;"></div>
<div class="t" style="left:821px;top:773.87px;font-size:11.5px;color:#555;font-weight:normal;letter-spacing:-0.3px;">0</div>
<div style="left:811.8px;top:809.1px;width:3.8px;height:3.8px;background:#4a4a4a;border-radius:50%;"></div>
<div style="left:811.8px;top:840.6px;width:3.8px;height:3.8px;background:#4a4a4a;border-radius:50%;"></div>
<div class="t" style="left:821px;top:836.87px;font-size:11.5px;color:#555;font-weight:normal;letter-spacing:-0.3px;">5</div>
<div style="left:811.8px;top:872.1px;width:3.8px;height:3.8px;background:#4a4a4a;border-radius:50%;"></div>
<div style="left:811.8px;top:903.6px;width:3.8px;height:3.8px;background:#4a4a4a;border-radius:50%;"></div>
<div class="t" style="left:821px;top:899.87px;font-size:11.5px;color:#555;font-weight:normal;letter-spacing:-0.3px;">10</div>
<div style="left:811.8px;top:935.1px;width:3.8px;height:3.8px;background:#4a4a4a;border-radius:50%;"></div>
<div style="left:811.8px;top:966.6px;width:3.8px;height:3.8px;background:#4a4a4a;border-radius:50%;"></div>
<div class="t" style="left:821px;top:962.87px;font-size:11.5px;color:#555;font-weight:normal;letter-spacing:-0.3px;">20</div>
<div style="left:811.8px;top:998.1px;width:3.8px;height:3.8px;background:#4a4a4a;border-radius:50%;"></div>
<div style="left:811.8px;top:1029.6px;width:3.8px;height:3.8px;background:#4a4a4a;border-radius:50%;"></div>
<div class="t" style="left:821px;top:1025.87px;font-size:11.5px;color:#555;font-weight:normal;letter-spacing:-0.3px;">30</div>
<div style="left:811.8px;top:1061.1px;width:3.8px;height:3.8px;background:#4a4a4a;border-radius:50%;"></div>
<div style="left:811.8px;top:1092.6px;width:3.8px;height:3.8px;background:#4a4a4a;border-radius:50%;"></div>
<div class="t" style="left:821px;top:1088.87px;font-size:11.5px;color:#555;font-weight:normal;letter-spacing:-0.3px;">40</div>
<div style="left:811.8px;top:1107.6px;width:3.8px;height:3.8px;background:#4a4a4a;border-radius:50%;"></div>
<div style="left:811.8px;top:1123.1px;width:3.8px;height:3.8px;background:#4a4a4a;border-radius:50%;"></div>
<div class="t" style="left:821px;top:1119.37px;font-size:11.5px;color:#555;font-weight:normal;letter-spacing:-0.3px;">50</div>
<div style="left:811.8px;top:1138.6px;width:3.8px;height:3.8px;background:#4a4a4a;border-radius:50%;"></div>
<div style="left:811.8px;top:1154.1px;width:3.8px;height:3.8px;background:#4a4a4a;border-radius:50%;"></div>
<div class="t" style="left:821px;top:1150.37px;font-size:11.5px;color:#555;font-weight:normal;letter-spacing:-0.3px;">60</div>
<div style="left:811.8px;top:1169.6px;width:3.8px;height:3.8px;background:#4a4a4a;border-radius:50%;"></div>
<div style="left:811.8px;top:1185.1px;width:3.8px;height:3.8px;background:#4a4a4a;border-radius:50%;"></div>
<svg style="position:absolute;left:820px;top:1182.0px;" width="18" height="10" viewBox="0 0 18 10"><path d="M8.5 5 C 6 1.5, 1.2 1.5, 1.2 5 C 1.2 8.5, 6 8.5, 8.5 5 C 11 1.5, 15.8 1.5, 15.8 5 C 15.8 8.5, 11 8.5, 8.5 5 Z" fill="none" stroke="#555" stroke-width="1.7"/></svg>
<div style="left:766px;top:640px;width:18px;height:560px;border-radius:4px;border:2px solid #444;box-sizing:border-box;background:#141414;"></div>
<div style="left:766px;top:799.6px;width:18px;height:400.4px;background:#3c3c3c;border-radius:0 0 4px 4px;"></div>
<div style="left:732px;top:739.6px;width:86px;height:54.5px;border-radius:0 0 10px 10px;background:linear-gradient(#fefefe 0px,#fbfbfa 8px,#eaece8 12.5px,#e7e9e5 40px,#e3e5e1 54px);box-shadow:inset 0 0 0 1px rgba(255,255,255,0.45), -1px 2px 3px rgba(0,0,0,0.6);"></div>
<div style="left:732px;top:798.6px;width:86px;height:55px;border-radius:10px 10px 0 0;background:linear-gradient(#eff0ee 0px,#e7e9e5 5px,#e2e4e0 41px,#c6c8c4 45px,#abada9 52px,#b4b6b2 55px);box-shadow:inset 0 0 0 1px rgba(255,255,255,0.4), -1px 2px 3px rgba(0,0,0,0.6);"></div>
<div style="left:749px;top:766.6px;width:52px;height:2.2px;background:#f7f8f5;border-radius:1px;"></div>
<div style="left:749px;top:768.6px;width:52px;height:2.4px;background:#c3c5c1;border-radius:1.2px;"></div>
<div style="left:749px;top:778.4px;width:52px;height:2.2px;background:#f7f8f5;border-radius:1px;"></div>
<div style="left:749px;top:780.4px;width:52px;height:2.4px;background:#c3c5c1;border-radius:1.2px;"></div>
<div style="left:749px;top:811.4px;width:52px;height:2.2px;background:#f7f8f5;border-radius:1px;"></div>
<div style="left:749px;top:813.4px;width:52px;height:2.4px;background:#c3c5c1;border-radius:1.2px;"></div>
<div style="left:749px;top:822.8px;width:52px;height:2.2px;background:#f7f8f5;border-radius:1px;"></div>
<div style="left:749px;top:824.8px;width:52px;height:2.4px;background:#c3c5c1;border-radius:1.2px;"></div>
<div style="left:648px;top:1276px;width:214px;height:210px;background:#666666;"></div>
<div style="left:654.5px;top:1282.5px;width:201px;height:65.5px;border-radius:13px;background:linear-gradient(rgba(40,40,40,0.6) 0px, rgba(90,90,90,0) 12px, rgba(170,170,170,0) 35%, rgba(178,178,178,0.95) 100%);"></div>
<div style="left:656px;top:1285px;width:198px;height:61px;border-radius:11px;background:#030303;"></div>
<div style="left:660.5px;top:1289.5px;width:189.5px;height:52.5px;border-radius:8px;background:linear-gradient(#e8e8e8,#dadada);box-shadow:inset 0 0 0 1px rgba(255,255,255,0.45);"></div>
<div class="t" style="left:647px;top:1298.95px;width:214px;text-align:center;font-size:35.5px;color:#363636;font-weight:bold;letter-spacing:-0.6px;">Solo</div>
<svg style="position:absolute;left:648px;top:1350px;" width="214" height="130" viewBox="0 0 214 130"><defs><clipPath id="dc648"><rect x="50" y="-20" width="200" height="144" rx="5"/></clipPath></defs><g clip-path="url(#dc648)"><circle cx="89" cy="110" r="57.5" fill="none" stroke="#b8b8b8" stroke-width="5"/><circle cx="89" cy="110" r="50" fill="#b8b8b8"/></g><rect x="92" y="41.9" width="72" height="5" rx="2" fill="#b8b8b8"/><rect x="90" y="46" width="76" height="10" rx="2" fill="#b8b8b8"/><rect x="92" y="46" width="72" height="5" fill="#666666"/><rect x="92" y="51" width="72" height="19" fill="#b8b8b8"/><rect x="100.1" y="50" width="3.8" height="7.5" rx="1.9" fill="#666666"/><rect x="116.1" y="50" width="3.8" height="7.5" rx="1.9" fill="#666666"/><rect x="136.1" y="50" width="3.8" height="7.5" rx="1.9" fill="#666666"/><rect x="152.1" y="50" width="3.8" height="7.5" rx="1.9" fill="#666666"/><rect x="92" y="70" width="72" height="5.7" fill="#666666"/><rect x="92" y="75.7" width="72" height="4.5" rx="1" fill="#b8b8b8"/><path fill-rule="evenodd" d="M50 23 A44 15 0 1 0 138 23 A44 15 0 1 0 50 23 Z M57.6 21 A36.4 9.1 0 1 0 130.4 21 A36.4 9.1 0 1 0 57.6 21 Z" fill="#b8b8b8"/><ellipse cx="94" cy="19" rx="6.1" ry="3.2" fill="#b8b8b8"/></svg>
<div class="t" style="left:659px;top:1356.72px;font-size:19px;color:#c8c8c8;font-weight:normal;-webkit-text-stroke:0.6px #c8c8c8;">VCA1</div>
<div style="left:648px;top:1488px;width:214px;height:46px;background:#50b96b;"></div>
<div class="t" style="left:648px;top:1497.20px;width:214px;text-align:center;font-size:30px;color:#c8cad4;font-weight:bold;letter-spacing:-0.3px;">Drum</div>
<div style="left:864px;top:124px;width:214px;height:16px;background:#50b96b;"></div>
<div style="left:864px;top:142px;width:214px;height:422px;background:#666666;"></div>
<div style="left:870.5px;top:152.5px;width:201px;height:253.5px;border-radius:14px;background:linear-gradient(rgba(40,40,40,0.6) 0px, rgba(90,90,90,0) 12px, rgba(170,170,170,0) 50%, rgba(178,178,178,0.95) 100%);"></div>
<div style="left:872px;top:155px;width:198px;height:249px;border-radius:12px;background:#020202;"></div>
<div style="left:878px;top:161.5px;width:186px;height:74px;background:#2a2a2a;border-radius:8px;"></div>
<div style="left:870.5px;top:487.5px;width:201px;height:66.5px;border-radius:13px;background:linear-gradient(rgba(40,40,40,0.6) 0px, rgba(90,90,90,0) 12px, rgba(170,170,170,0) 35%, rgba(178,178,178,0.95) 100%);"></div>
<div style="left:872px;top:490px;width:198px;height:62px;border-radius:11px;background:#030303;"></div>
<div style="left:876.5px;top:496px;width:189.5px;height:51.5px;border-radius:8px;background:linear-gradient(#e8e8e8,#dadada);box-shadow:inset 0 0 0 1px rgba(255,255,255,0.45);"></div>
<div class="t" style="left:863px;top:504.75px;width:214px;text-align:center;font-size:35.5px;color:#363636;font-weight:bold;letter-spacing:-0.1px;">Mute</div>
<div style="left:864px;top:566px;width:214px;height:708px;background:#50b96b;"></div>
<div style="left:876px;top:578px;width:188px;height:684px;border-radius:12px;background:#050505;"></div>
<div style="left:880px;top:582px;width:180px;height:676px;border-radius:9px;background:#3f3f3f;"></div>
<div style="left:884px;top:586px;width:172px;height:668px;border-radius:4px;background:#141414;"></div>
<div style="left:1027.8px;top:651.6px;width:3.8px;height:3.8px;background:#4a4a4a;border-radius:50%;"></div>
<div class="t" style="left:1037px;top:647.87px;font-size:11.5px;color:#555;font-weight:normal;letter-spacing:-0.3px;">10</div>
<div style="left:1027.8px;top:683.1px;width:3.8px;height:3.8px;background:#4a4a4a;border-radius:50%;"></div>
<div style="left:1027.8px;top:714.6px;width:3.8px;height:3.8px;background:#4a4a4a;border-radius:50%;"></div>
<div class="t" style="left:1037px;top:710.87px;font-size:11.5px;color:#555;font-weight:normal;letter-spacing:-0.3px;">5</div>
<div style="left:1027.8px;top:746.1px;width:3.8px;height:3.8px;background:#4a4a4a;border-radius:50%;"></div>
<div style="left:1027.8px;top:777.6px;width:3.8px;height:3.8px;background:#4a4a4a;border-radius:50%;"></div>
<div class="t" style="left:1037px;top:773.87px;font-size:11.5px;color:#555;font-weight:normal;letter-spacing:-0.3px;">0</div>
<div style="left:1027.8px;top:809.1px;width:3.8px;height:3.8px;background:#4a4a4a;border-radius:50%;"></div>
<div style="left:1027.8px;top:840.6px;width:3.8px;height:3.8px;background:#4a4a4a;border-radius:50%;"></div>
<div class="t" style="left:1037px;top:836.87px;font-size:11.5px;color:#555;font-weight:normal;letter-spacing:-0.3px;">5</div>
<div style="left:1027.8px;top:872.1px;width:3.8px;height:3.8px;background:#4a4a4a;border-radius:50%;"></div>
<div style="left:1027.8px;top:903.6px;width:3.8px;height:3.8px;background:#4a4a4a;border-radius:50%;"></div>
<div class="t" style="left:1037px;top:899.87px;font-size:11.5px;color:#555;font-weight:normal;letter-spacing:-0.3px;">10</div>
<div style="left:1027.8px;top:935.1px;width:3.8px;height:3.8px;background:#4a4a4a;border-radius:50%;"></div>
<div style="left:1027.8px;top:966.6px;width:3.8px;height:3.8px;background:#4a4a4a;border-radius:50%;"></div>
<div class="t" style="left:1037px;top:962.87px;font-size:11.5px;color:#555;font-weight:normal;letter-spacing:-0.3px;">20</div>
<div style="left:1027.8px;top:998.1px;width:3.8px;height:3.8px;background:#4a4a4a;border-radius:50%;"></div>
<div style="left:1027.8px;top:1029.6px;width:3.8px;height:3.8px;background:#4a4a4a;border-radius:50%;"></div>
<div class="t" style="left:1037px;top:1025.87px;font-size:11.5px;color:#555;font-weight:normal;letter-spacing:-0.3px;">30</div>
<div style="left:1027.8px;top:1061.1px;width:3.8px;height:3.8px;background:#4a4a4a;border-radius:50%;"></div>
<div style="left:1027.8px;top:1092.6px;width:3.8px;height:3.8px;background:#4a4a4a;border-radius:50%;"></div>
<div class="t" style="left:1037px;top:1088.87px;font-size:11.5px;color:#555;font-weight:normal;letter-spacing:-0.3px;">40</div>
<div style="left:1027.8px;top:1107.6px;width:3.8px;height:3.8px;background:#4a4a4a;border-radius:50%;"></div>
<div style="left:1027.8px;top:1123.1px;width:3.8px;height:3.8px;background:#4a4a4a;border-radius:50%;"></div>
<div class="t" style="left:1037px;top:1119.37px;font-size:11.5px;color:#555;font-weight:normal;letter-spacing:-0.3px;">50</div>
<div style="left:1027.8px;top:1138.6px;width:3.8px;height:3.8px;background:#4a4a4a;border-radius:50%;"></div>
<div style="left:1027.8px;top:1154.1px;width:3.8px;height:3.8px;background:#4a4a4a;border-radius:50%;"></div>
<div class="t" style="left:1037px;top:1150.37px;font-size:11.5px;color:#555;font-weight:normal;letter-spacing:-0.3px;">60</div>
<div style="left:1027.8px;top:1169.6px;width:3.8px;height:3.8px;background:#4a4a4a;border-radius:50%;"></div>
<div style="left:1027.8px;top:1185.1px;width:3.8px;height:3.8px;background:#4a4a4a;border-radius:50%;"></div>
<svg style="position:absolute;left:1036px;top:1182.0px;" width="18" height="10" viewBox="0 0 18 10"><path d="M8.5 5 C 6 1.5, 1.2 1.5, 1.2 5 C 1.2 8.5, 6 8.5, 8.5 5 C 11 1.5, 15.8 1.5, 15.8 5 C 15.8 8.5, 11 8.5, 8.5 5 Z" fill="none" stroke="#555" stroke-width="1.7"/></svg>
<div style="left:982px;top:640px;width:18px;height:560px;border-radius:4px;border:2px solid #444;box-sizing:border-box;background:#141414;"></div>
<div style="left:982px;top:782px;width:18px;height:418px;background:#3c3c3c;border-radius:0 0 4px 4px;"></div>
<div style="left:948px;top:722px;width:86px;height:54.5px;border-radius:0 0 10px 10px;background:linear-gradient(#fefefe 0px,#fbfbfa 8px,#eaece8 12.5px,#e7e9e5 40px,#e3e5e1 54px);box-shadow:inset 0 0 0 1px rgba(255,255,255,0.45), -1px 2px 3px rgba(0,0,0,0.6);"></div>
<div style="left:948px;top:781px;width:86px;height:55px;border-radius:10px 10px 0 0;background:linear-gradient(#eff0ee 0px,#e7e9e5 5px,#e2e4e0 41px,#c6c8c4 45px,#abada9 52px,#b4b6b2 55px);box-shadow:inset 0 0 0 1px rgba(255,255,255,0.4), -1px 2px 3px rgba(0,0,0,0.6);"></div>
<div style="left:965px;top:749.0px;width:52px;height:2.2px;background:#f7f8f5;border-radius:1px;"></div>
<div style="left:965px;top:751.0px;width:52px;height:2.4px;background:#c3c5c1;border-radius:1.2px;"></div>
<div style="left:965px;top:760.8px;width:52px;height:2.2px;background:#f7f8f5;border-radius:1px;"></div>
<div style="left:965px;top:762.8px;width:52px;height:2.4px;background:#c3c5c1;border-radius:1.2px;"></div>
<div style="left:965px;top:793.8px;width:52px;height:2.2px;background:#f7f8f5;border-radius:1px;"></div>
<div style="left:965px;top:795.8px;width:52px;height:2.4px;background:#c3c5c1;border-radius:1.2px;"></div>
<div style="left:965px;top:805.1999999999999px;width:52px;height:2.2px;background:#f7f8f5;border-radius:1px;"></div>
<div style="left:965px;top:807.1999999999999px;width:52px;height:2.4px;background:#c3c5c1;border-radius:1.2px;"></div>
<div style="left:864px;top:1276px;width:214px;height:210px;background:#666666;"></div>
<div style="left:870.5px;top:1282.5px;width:201px;height:65.5px;border-radius:13px;background:linear-gradient(rgba(40,40,40,0.6) 0px, rgba(90,90,90,0) 12px, rgba(170,170,170,0) 35%, rgba(178,178,178,0.95) 100%);"></div>
<div style="left:872px;top:1285px;width:198px;height:61px;border-radius:11px;background:#030303;"></div>
<div style="left:876.5px;top:1289.5px;width:189.5px;height:52.5px;border-radius:8px;background:linear-gradient(#e8e8e8,#dadada);box-shadow:inset 0 0 0 1px rgba(255,255,255,0.45);"></div>
<div class="t" style="left:863px;top:1298.95px;width:214px;text-align:center;font-size:35.5px;color:#363636;font-weight:bold;letter-spacing:-0.6px;">Solo</div>
<div class="t" style="left:864px;top:1412.56px;width:214px;text-align:center;font-size:39.5px;color:#d0d0d0;font-weight:bold;letter-spacing:-0.5px;">Inst</div>
<div class="t" style="left:875px;top:1356.72px;font-size:19px;color:#c8c8c8;font-weight:normal;-webkit-text-stroke:0.6px #c8c8c8;">VCA2</div>
<div style="left:864px;top:1488px;width:214px;height:46px;background:#50b96b;"></div>
<div style="left:1080px;top:124px;width:214px;height:16px;background:#50b96b;"></div>
<div style="left:1080px;top:142px;width:214px;height:422px;background:#666666;"></div>
<div style="left:1086.5px;top:152.5px;width:201px;height:253.5px;border-radius:14px;background:linear-gradient(rgba(40,40,40,0.6) 0px, rgba(90,90,90,0) 12px, rgba(170,170,170,0) 50%, rgba(178,178,178,0.95) 100%);"></div>
<div style="left:1088px;top:155px;width:198px;height:249px;border-radius:12px;background:#020202;"></div>
<div style="left:1094px;top:161.5px;width:186px;height:74px;background:#2a2a2a;border-radius:8px;"></div>
<div style="left:1086.5px;top:487.5px;width:201px;height:66.5px;border-radius:13px;background:linear-gradient(rgba(40,40,40,0.6) 0px, rgba(90,90,90,0) 12px, rgba(170,170,170,0) 35%, rgba(178,178,178,0.95) 100%);"></div>
<div style="left:1088px;top:490px;width:198px;height:62px;border-radius:11px;background:#030303;"></div>
<div style="left:1092.5px;top:496px;width:189.5px;height:51.5px;border-radius:8px;background:linear-gradient(#e8e8e8,#dadada);box-shadow:inset 0 0 0 1px rgba(255,255,255,0.45);"></div>
<div class="t" style="left:1079px;top:504.75px;width:214px;text-align:center;font-size:35.5px;color:#363636;font-weight:bold;letter-spacing:-0.1px;">Mute</div>
<div style="left:1080px;top:566px;width:214px;height:708px;background:#50b96b;"></div>
<div style="left:1092px;top:578px;width:188px;height:684px;border-radius:12px;background:#050505;"></div>
<div style="left:1096px;top:582px;width:180px;height:676px;border-radius:9px;background:#3f3f3f;"></div>
<div style="left:1100px;top:586px;width:172px;height:668px;border-radius:4px;background:#141414;"></div>
<div style="left:1243.8px;top:651.6px;width:3.8px;height:3.8px;background:#4a4a4a;border-radius:50%;"></div>
<div class="t" style="left:1253px;top:647.87px;font-size:11.5px;color:#555;font-weight:normal;letter-spacing:-0.3px;">10</div>
<div style="left:1243.8px;top:683.1px;width:3.8px;height:3.8px;background:#4a4a4a;border-radius:50%;"></div>
<div style="left:1243.8px;top:714.6px;width:3.8px;height:3.8px;background:#4a4a4a;border-radius:50%;"></div>
<div class="t" style="left:1253px;top:710.87px;font-size:11.5px;color:#555;font-weight:normal;letter-spacing:-0.3px;">5</div>
<div style="left:1243.8px;top:746.1px;width:3.8px;height:3.8px;background:#4a4a4a;border-radius:50%;"></div>
<div style="left:1243.8px;top:777.6px;width:3.8px;height:3.8px;background:#4a4a4a;border-radius:50%;"></div>
<div class="t" style="left:1253px;top:773.87px;font-size:11.5px;color:#555;font-weight:normal;letter-spacing:-0.3px;">0</div>
<div style="left:1243.8px;top:809.1px;width:3.8px;height:3.8px;background:#4a4a4a;border-radius:50%;"></div>
<div style="left:1243.8px;top:840.6px;width:3.8px;height:3.8px;background:#4a4a4a;border-radius:50%;"></div>
<div class="t" style="left:1253px;top:836.87px;font-size:11.5px;color:#555;font-weight:normal;letter-spacing:-0.3px;">5</div>
<div style="left:1243.8px;top:872.1px;width:3.8px;height:3.8px;background:#4a4a4a;border-radius:50%;"></div>
<div style="left:1243.8px;top:903.6px;width:3.8px;height:3.8px;background:#4a4a4a;border-radius:50%;"></div>
<div class="t" style="left:1253px;top:899.87px;font-size:11.5px;color:#555;font-weight:normal;letter-spacing:-0.3px;">10</div>
<div style="left:1243.8px;top:935.1px;width:3.8px;height:3.8px;background:#4a4a4a;border-radius:50%;"></div>
<div style="left:1243.8px;top:966.6px;width:3.8px;height:3.8px;background:#4a4a4a;border-radius:50%;"></div>
<div class="t" style="left:1253px;top:962.87px;font-size:11.5px;color:#555;font-weight:normal;letter-spacing:-0.3px;">20</div>
<div style="left:1243.8px;top:998.1px;width:3.8px;height:3.8px;background:#4a4a4a;border-radius:50%;"></div>
<div style="left:1243.8px;top:1029.6px;width:3.8px;height:3.8px;background:#4a4a4a;border-radius:50%;"></div>
<div class="t" style="left:1253px;top:1025.87px;font-size:11.5px;color:#555;font-weight:normal;letter-spacing:-0.3px;">30</div>
<div style="left:1243.8px;top:1061.1px;width:3.8px;height:3.8px;background:#4a4a4a;border-radius:50%;"></div>
<div style="left:1243.8px;top:1092.6px;width:3.8px;height:3.8px;background:#4a4a4a;border-radius:50%;"></div>
<div class="t" style="left:1253px;top:1088.87px;font-size:11.5px;color:#555;font-weight:normal;letter-spacing:-0.3px;">40</div>
<div style="left:1243.8px;top:1107.6px;width:3.8px;height:3.8px;background:#4a4a4a;border-radius:50%;"></div>
<div style="left:1243.8px;top:1123.1px;width:3.8px;height:3.8px;background:#4a4a4a;border-radius:50%;"></div>
<div class="t" style="left:1253px;top:1119.37px;font-size:11.5px;color:#555;font-weight:normal;letter-spacing:-0.3px;">50</div>
<div style="left:1243.8px;top:1138.6px;width:3.8px;height:3.8px;background:#4a4a4a;border-radius:50%;"></div>
<div style="left:1243.8px;top:1154.1px;width:3.8px;height:3.8px;background:#4a4a4a;border-radius:50%;"></div>
<div class="t" style="left:1253px;top:1150.37px;font-size:11.5px;color:#555;font-weight:normal;letter-spacing:-0.3px;">60</div>
<div style="left:1243.8px;top:1169.6px;width:3.8px;height:3.8px;background:#4a4a4a;border-radius:50%;"></div>
<div style="left:1243.8px;top:1185.1px;width:3.8px;height:3.8px;background:#4a4a4a;border-radius:50%;"></div>
<svg style="position:absolute;left:1252px;top:1182.0px;" width="18" height="10" viewBox="0 0 18 10"><path d="M8.5 5 C 6 1.5, 1.2 1.5, 1.2 5 C 1.2 8.5, 6 8.5, 8.5 5 C 11 1.5, 15.8 1.5, 15.8 5 C 15.8 8.5, 11 8.5, 8.5 5 Z" fill="none" stroke="#555" stroke-width="1.7"/></svg>
<div style="left:1198px;top:640px;width:18px;height:560px;border-radius:4px;border:2px solid #444;box-sizing:border-box;background:#141414;"></div>
<div style="left:1198px;top:782px;width:18px;height:418px;background:#3c3c3c;border-radius:0 0 4px 4px;"></div>
<div style="left:1164px;top:722px;width:86px;height:54.5px;border-radius:0 0 10px 10px;background:linear-gradient(#fefefe 0px,#fbfbfa 8px,#eaece8 12.5px,#e7e9e5 40px,#e3e5e1 54px);box-shadow:inset 0 0 0 1px rgba(255,255,255,0.45), -1px 2px 3px rgba(0,0,0,0.6);"></div>
<div style="left:1164px;top:781px;width:86px;height:55px;border-radius:10px 10px 0 0;background:linear-gradient(#eff0ee 0px,#e7e9e5 5px,#e2e4e0 41px,#c6c8c4 45px,#abada9 52px,#b4b6b2 55px);box-shadow:inset 0 0 0 1px rgba(255,255,255,0.4), -1px 2px 3px rgba(0,0,0,0.6);"></div>
<div style="left:1181px;top:749.0px;width:52px;height:2.2px;background:#f7f8f5;border-radius:1px;"></div>
<div style="left:1181px;top:751.0px;width:52px;height:2.4px;background:#c3c5c1;border-radius:1.2px;"></div>
<div style="left:1181px;top:760.8px;width:52px;height:2.2px;background:#f7f8f5;border-radius:1px;"></div>
<div style="left:1181px;top:762.8px;width:52px;height:2.4px;background:#c3c5c1;border-radius:1.2px;"></div>
<div style="left:1181px;top:793.8px;width:52px;height:2.2px;background:#f7f8f5;border-radius:1px;"></div>
<div style="left:1181px;top:795.8px;width:52px;height:2.4px;background:#c3c5c1;border-radius:1.2px;"></div>
<div style="left:1181px;top:805.1999999999999px;width:52px;height:2.2px;background:#f7f8f5;border-radius:1px;"></div>
<div style="left:1181px;top:807.1999999999999px;width:52px;height:2.4px;background:#c3c5c1;border-radius:1.2px;"></div>
<div style="left:1080px;top:1276px;width:214px;height:210px;background:#666666;"></div>
<div style="left:1086.5px;top:1282.5px;width:201px;height:65.5px;border-radius:13px;background:linear-gradient(rgba(40,40,40,0.6) 0px, rgba(90,90,90,0) 12px, rgba(170,170,170,0) 35%, rgba(178,178,178,0.95) 100%);"></div>
<div style="left:1088px;top:1285px;width:198px;height:61px;border-radius:11px;background:#030303;"></div>
<div style="left:1092.5px;top:1289.5px;width:189.5px;height:52.5px;border-radius:8px;background:linear-gradient(#e8e8e8,#dadada);box-shadow:inset 0 0 0 1px rgba(255,255,255,0.45);"></div>
<div class="t" style="left:1079px;top:1298.95px;width:214px;text-align:center;font-size:35.5px;color:#363636;font-weight:bold;letter-spacing:-0.6px;">Solo</div>
<svg style="position:absolute;left:1080px;top:1350px;" width="214" height="130" viewBox="0 0 214 130"><path d="M 48.20,102.01 L 48.20,83.81 C 52.01,82.54 57.94,80.42 59.21,77.46 L 57.51,72.80 C 56.24,67.72 55.40,64.34 55.40,62.22 C 53.28,60.95 52.43,58.41 52.86,55.02 C 53.03,52.48 54.13,51.64 54.38,50.79 L 54.13,44.02 C 54.13,36.40 61.32,32.59 69.79,32.59 C 79.10,32.59 85.02,36.40 85.02,44.02 L 85.02,52.06 C 86.29,54.18 86.29,59.26 81.64,62.22 C 80.79,67.72 79.94,72.80 79.10,76.19 L 80.79,81.27 L 80.79,102.01 Z" fill="#b8b8b8"/><path d="M 167.98,102.01 L 167.98,83.81 C 164.17,82.54 158.25,80.42 156.98,77.46 L 158.67,72.80 C 159.94,67.72 160.79,64.34 160.79,62.22 C 162.90,60.95 163.75,58.41 163.33,55.02 C 163.16,52.48 162.06,51.64 161.80,50.79 L 162.06,44.02 C 162.06,36.40 154.86,32.59 146.40,32.59 C 137.09,32.59 131.16,36.40 131.16,44.02 L 131.16,52.06 C 129.89,54.18 129.89,59.26 134.55,62.22 C 135.39,67.72 136.24,72.80 137.09,76.19 L 135.39,81.27 L 135.39,102.01 Z" fill="#b8b8b8"/><path d="M 69.79,105.98 C 72.33,98.20 77.41,93.12 84.60,89.73 C 82.48,84.65 82.91,80.42 85.02,74.49 C 88.41,64.34 90.95,52.48 93.07,44.02 C 95.18,36.40 101.11,32.17 107.88,32.17 C 114.65,32.17 121.00,36.40 123.12,44.02 C 125.23,52.48 127.35,64.34 130.74,74.49 C 132.85,80.42 133.28,84.65 131.16,89.73 C 138.36,93.12 143.43,98.20 145.97,105.98 Z" fill="#b8b8b8" stroke="#666666" stroke-width="3.6" stroke-linejoin="round"/></svg>
<div class="t" style="left:1091px;top:1356.72px;font-size:19px;color:#c8c8c8;font-weight:normal;-webkit-text-stroke:0.6px #c8c8c8;">VCA3</div>
<div style="left:1080px;top:1488px;width:214px;height:46px;background:#50b96b;"></div>
<div class="t" style="left:1080px;top:1497.20px;width:214px;text-align:center;font-size:30px;color:#c8cad4;font-weight:bold;letter-spacing:-0.3px;">Vox</div>
<div style="left:1296px;top:124px;width:214px;height:16px;background:#50b96b;"></div>
<div style="left:1296px;top:142px;width:214px;height:422px;background:#666666;"></div>
<div style="left:1302.5px;top:152.5px;width:201px;height:253.5px;border-radius:14px;background:linear-gradient(rgba(40,40,40,0.6) 0px, rgba(90,90,90,0) 12px, rgba(170,170,170,0) 50%, rgba(178,178,178,0.95) 100%);"></div>
<div style="left:1304px;top:155px;width:198px;height:249px;border-radius:12px;background:#020202;"></div>
<div style="left:1310px;top:161.5px;width:186px;height:74px;background:#2a2a2a;border-radius:8px;"></div>
<div style="left:1302.5px;top:487.5px;width:201px;height:66.5px;border-radius:13px;background:linear-gradient(rgba(40,40,40,0.6) 0px, rgba(90,90,90,0) 12px, rgba(170,170,170,0) 35%, rgba(178,178,178,0.95) 100%);"></div>
<div style="left:1304px;top:490px;width:198px;height:62px;border-radius:11px;background:#030303;"></div>
<div style="left:1308.5px;top:496px;width:189.5px;height:51.5px;border-radius:8px;background:linear-gradient(#e8e8e8,#dadada);box-shadow:inset 0 0 0 1px rgba(255,255,255,0.45);"></div>
<div class="t" style="left:1295px;top:504.75px;width:214px;text-align:center;font-size:35.5px;color:#363636;font-weight:bold;letter-spacing:-0.1px;">Mute</div>
<div style="left:1296px;top:566px;width:214px;height:708px;background:#50b96b;"></div>
<div style="left:1308px;top:578px;width:188px;height:684px;border-radius:12px;background:#050505;"></div>
<div style="left:1312px;top:582px;width:180px;height:676px;border-radius:9px;background:#3f3f3f;"></div>
<div style="left:1316px;top:586px;width:172px;height:668px;border-radius:4px;background:#141414;"></div>
<div style="left:1459.8px;top:651.6px;width:3.8px;height:3.8px;background:#4a4a4a;border-radius:50%;"></div>
<div class="t" style="left:1469px;top:647.87px;font-size:11.5px;color:#555;font-weight:normal;letter-spacing:-0.3px;">10</div>
<div style="left:1459.8px;top:683.1px;width:3.8px;height:3.8px;background:#4a4a4a;border-radius:50%;"></div>
<div style="left:1459.8px;top:714.6px;width:3.8px;height:3.8px;background:#4a4a4a;border-radius:50%;"></div>
<div class="t" style="left:1469px;top:710.87px;font-size:11.5px;color:#555;font-weight:normal;letter-spacing:-0.3px;">5</div>
<div style="left:1459.8px;top:746.1px;width:3.8px;height:3.8px;background:#4a4a4a;border-radius:50%;"></div>
<div style="left:1459.8px;top:777.6px;width:3.8px;height:3.8px;background:#4a4a4a;border-radius:50%;"></div>
<div class="t" style="left:1469px;top:773.87px;font-size:11.5px;color:#555;font-weight:normal;letter-spacing:-0.3px;">0</div>
<div style="left:1459.8px;top:809.1px;width:3.8px;height:3.8px;background:#4a4a4a;border-radius:50%;"></div>
<div style="left:1459.8px;top:840.6px;width:3.8px;height:3.8px;background:#4a4a4a;border-radius:50%;"></div>
<div class="t" style="left:1469px;top:836.87px;font-size:11.5px;color:#555;font-weight:normal;letter-spacing:-0.3px;">5</div>
<div style="left:1459.8px;top:872.1px;width:3.8px;height:3.8px;background:#4a4a4a;border-radius:50%;"></div>
<div style="left:1459.8px;top:903.6px;width:3.8px;height:3.8px;background:#4a4a4a;border-radius:50%;"></div>
<div class="t" style="left:1469px;top:899.87px;font-size:11.5px;color:#555;font-weight:normal;letter-spacing:-0.3px;">10</div>
<div style="left:1459.8px;top:935.1px;width:3.8px;height:3.8px;background:#4a4a4a;border-radius:50%;"></div>
<div style="left:1459.8px;top:966.6px;width:3.8px;height:3.8px;background:#4a4a4a;border-radius:50%;"></div>
<div class="t" style="left:1469px;top:962.87px;font-size:11.5px;color:#555;font-weight:normal;letter-spacing:-0.3px;">20</div>
<div style="left:1459.8px;top:998.1px;width:3.8px;height:3.8px;background:#4a4a4a;border-radius:50%;"></div>
<div style="left:1459.8px;top:1029.6px;width:3.8px;height:3.8px;background:#4a4a4a;border-radius:50%;"></div>
<div class="t" style="left:1469px;top:1025.87px;font-size:11.5px;color:#555;font-weight:normal;letter-spacing:-0.3px;">30</div>
<div style="left:1459.8px;top:1061.1px;width:3.8px;height:3.8px;background:#4a4a4a;border-radius:50%;"></div>
<div style="left:1459.8px;top:1092.6px;width:3.8px;height:3.8px;background:#4a4a4a;border-radius:50%;"></div>
<div class="t" style="left:1469px;top:1088.87px;font-size:11.5px;color:#555;font-weight:normal;letter-spacing:-0.3px;">40</div>
<div style="left:1459.8px;top:1107.6px;width:3.8px;height:3.8px;background:#4a4a4a;border-radius:50%;"></div>
<div style="left:1459.8px;top:1123.1px;width:3.8px;height:3.8px;background:#4a4a4a;border-radius:50%;"></div>
<div class="t" style="left:1469px;top:1119.37px;font-size:11.5px;color:#555;font-weight:normal;letter-spacing:-0.3px;">50</div>
<div style="left:1459.8px;top:1138.6px;width:3.8px;height:3.8px;background:#4a4a4a;border-radius:50%;"></div>
<div style="left:1459.8px;top:1154.1px;width:3.8px;height:3.8px;background:#4a4a4a;border-radius:50%;"></div>
<div class="t" style="left:1469px;top:1150.37px;font-size:11.5px;color:#555;font-weight:normal;letter-spacing:-0.3px;">60</div>
<div style="left:1459.8px;top:1169.6px;width:3.8px;height:3.8px;background:#4a4a4a;border-radius:50%;"></div>
<div style="left:1459.8px;top:1185.1px;width:3.8px;height:3.8px;background:#4a4a4a;border-radius:50%;"></div>
<svg style="position:absolute;left:1468px;top:1182.0px;" width="18" height="10" viewBox="0 0 18 10"><path d="M8.5 5 C 6 1.5, 1.2 1.5, 1.2 5 C 1.2 8.5, 6 8.5, 8.5 5 C 11 1.5, 15.8 1.5, 15.8 5 C 15.8 8.5, 11 8.5, 8.5 5 Z" fill="none" stroke="#555" stroke-width="1.7"/></svg>
<div style="left:1414px;top:640px;width:18px;height:560px;border-radius:4px;border:2px solid #444;box-sizing:border-box;background:#141414;"></div>
<div style="left:1414px;top:782px;width:18px;height:418px;background:#3c3c3c;border-radius:0 0 4px 4px;"></div>
<div style="left:1380px;top:722px;width:86px;height:54.5px;border-radius:0 0 10px 10px;background:linear-gradient(#fefefe 0px,#fbfbfa 8px,#eaece8 12.5px,#e7e9e5 40px,#e3e5e1 54px);box-shadow:inset 0 0 0 1px rgba(255,255,255,0.45), -1px 2px 3px rgba(0,0,0,0.6);"></div>
<div style="left:1380px;top:781px;width:86px;height:55px;border-radius:10px 10px 0 0;background:linear-gradient(#eff0ee 0px,#e7e9e5 5px,#e2e4e0 41px,#c6c8c4 45px,#abada9 52px,#b4b6b2 55px);box-shadow:inset 0 0 0 1px rgba(255,255,255,0.4), -1px 2px 3px rgba(0,0,0,0.6);"></div>
<div style="left:1397px;top:749.0px;width:52px;height:2.2px;background:#f7f8f5;border-radius:1px;"></div>
<div style="left:1397px;top:751.0px;width:52px;height:2.4px;background:#c3c5c1;border-radius:1.2px;"></div>
<div style="left:1397px;top:760.8px;width:52px;height:2.2px;background:#f7f8f5;border-radius:1px;"></div>
<div style="left:1397px;top:762.8px;width:52px;height:2.4px;background:#c3c5c1;border-radius:1.2px;"></div>
<div style="left:1397px;top:793.8px;width:52px;height:2.2px;background:#f7f8f5;border-radius:1px;"></div>
<div style="left:1397px;top:795.8px;width:52px;height:2.4px;background:#c3c5c1;border-radius:1.2px;"></div>
<div style="left:1397px;top:805.1999999999999px;width:52px;height:2.2px;background:#f7f8f5;border-radius:1px;"></div>
<div style="left:1397px;top:807.1999999999999px;width:52px;height:2.4px;background:#c3c5c1;border-radius:1.2px;"></div>
<div style="left:1296px;top:1276px;width:214px;height:210px;background:#666666;"></div>
<div style="left:1302.5px;top:1282.5px;width:201px;height:65.5px;border-radius:13px;background:linear-gradient(rgba(40,40,40,0.6) 0px, rgba(90,90,90,0) 12px, rgba(170,170,170,0) 35%, rgba(178,178,178,0.95) 100%);"></div>
<div style="left:1304px;top:1285px;width:198px;height:61px;border-radius:11px;background:#030303;"></div>
<div style="left:1308.5px;top:1289.5px;width:189.5px;height:52.5px;border-radius:8px;background:linear-gradient(#e8e8e8,#dadada);box-shadow:inset 0 0 0 1px rgba(255,255,255,0.45);"></div>
<div class="t" style="left:1295px;top:1298.95px;width:214px;text-align:center;font-size:35.5px;color:#363636;font-weight:bold;letter-spacing:-0.6px;">Solo</div>
<div class="t" style="left:1296px;top:1412.56px;width:214px;text-align:center;font-size:39.5px;color:#d0d0d0;font-weight:bold;">FX</div>
<div class="t" style="left:1307px;top:1356.72px;font-size:19px;color:#c8c8c8;font-weight:normal;-webkit-text-stroke:0.6px #c8c8c8;">VCA4</div>
<div style="left:1296px;top:1488px;width:214px;height:46px;background:#50b96b;"></div>
<div style="left:1944px;top:122px;width:104px;height:1414px;background:#151515;"></div>
<div class="t" style="left:1944px;top:143.87px;width:104px;text-align:center;font-size:28.5px;color:#e8e8e8;font-weight:normal;-webkit-text-stroke:0.9px #e8e8e8;">MUTE</div>
<div style="left:1948px;top:178px;width:96px;height:192px;background:#262626;border-radius:2px;"></div>
<div class="t" style="left:1944px;top:193.87px;width:104px;text-align:center;font-size:28.5px;color:#383838;font-weight:normal;-webkit-text-stroke:0.9px #383838;">Drum</div>
<div class="t" style="left:1944px;top:238.37px;width:104px;text-align:center;font-size:28.5px;color:#383838;font-weight:normal;-webkit-text-stroke:0.9px #383838;">Gtrs</div>
<div class="t" style="left:1944px;top:282.37px;width:104px;text-align:center;font-size:28.5px;color:#383838;font-weight:normal;-webkit-text-stroke:0.9px #383838;">Vox</div>
<div class="t" style="left:1944px;top:326.37px;width:104px;text-align:center;font-size:28.5px;color:#383838;font-weight:normal;-webkit-text-stroke:0.9px #383838;">Break</div>
<div class="t" style="left:1944px;top:532.30px;width:104px;text-align:center;font-size:28px;color:#444444;font-weight:bold;">MIX</div>
<div style="left:1948px;top:568px;width:96px;height:160px;background:#5e5e5e;"></div>
<div class="t" style="left:1948px;top:618.21px;width:96px;text-align:center;font-size:60px;color:#1e1e1e;font-weight:bold;transform:scaleX(0.9);">LR</div>
<div style="left:1948px;top:728px;width:96px;height:241px;background:#272727;"></div>
<div class="t" style="left:1944px;top:740.87px;width:104px;text-align:center;font-size:35px;color:#3e5a26;font-weight:normal;-webkit-text-stroke:0.8px #3e5a26;">ALL</div>
<div class="t" style="left:1944px;top:788.30px;width:104px;text-align:center;font-size:28px;color:#2e2e2e;font-weight:normal;-webkit-text-stroke:0.6px #2e2e2e;">Drum</div>
<div class="t" style="left:1944px;top:832.30px;width:104px;text-align:center;font-size:28px;color:#2e2e2e;font-weight:normal;-webkit-text-stroke:0.6px #2e2e2e;">Inst</div>
<div class="t" style="left:1944px;top:876.30px;width:104px;text-align:center;font-size:28px;color:#2e2e2e;font-weight:normal;-webkit-text-stroke:0.6px #2e2e2e;">Vox</div>
<div class="t" style="left:1944px;top:920.30px;width:104px;text-align:center;font-size:28px;color:#2e2e2e;font-weight:normal;-webkit-text-stroke:0.6px #2e2e2e;">FX</div>
<div style="left:1944px;top:970px;width:104px;height:244px;border:4px solid #fafafa;box-sizing:border-box;background:#282828;"></div>
<div class="t" style="left:1944px;top:982.87px;width:104px;text-align:center;font-size:35px;color:#3e3e3e;font-weight:normal;-webkit-text-stroke:0.8px #3e3e3e;">LR</div>
<div class="t" style="left:1944px;top:1027.07px;width:104px;text-align:center;font-size:35px;color:#3e3e3e;font-weight:normal;-webkit-text-stroke:0.8px #3e3e3e;">AUX</div>
<div class="t" style="left:1944px;top:1071.07px;width:104px;text-align:center;font-size:35px;color:#3e3e3e;font-weight:normal;-webkit-text-stroke:0.8px #3e3e3e;">FX</div>
<div class="t" style="left:1944px;top:1115.37px;width:104px;text-align:center;font-size:35px;color:#ffffff;font-weight:normal;-webkit-text-stroke:0.8px #ffffff;">SUB</div>
<div class="t" style="left:1944px;top:1159.17px;width:104px;text-align:center;font-size:35px;color:#ffffff;font-weight:normal;-webkit-text-stroke:0.8px #ffffff;">VCA</div>
<div class="t" style="left:1944px;top:1223.99px;width:104px;text-align:center;font-size:19.5px;color:#dddddd;font-weight:normal;-webkit-text-stroke:0.5px #dddddd;">MASTERS</div>
</body></html>
